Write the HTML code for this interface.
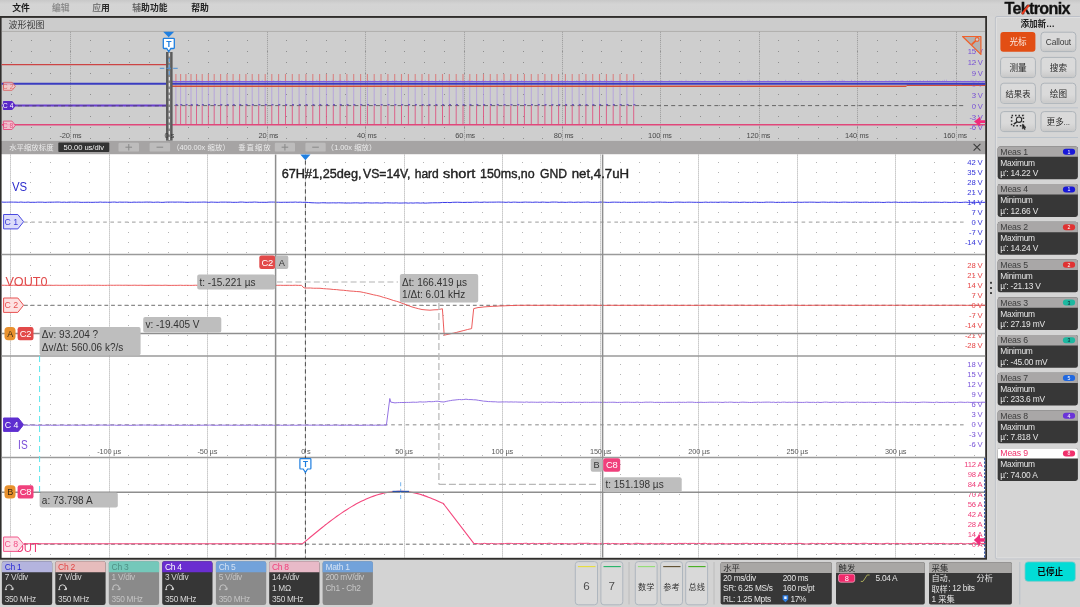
<!DOCTYPE html>
<html><head><meta charset="utf-8"><title>Oscilloscope</title>
<style>
html,body{margin:0;padding:0;background:#d3d3d3;}
body{width:1080px;height:607px;overflow:hidden;position:relative;font-family:"Liberation Sans", "Noto Sans CJK SC", sans-serif;}
svg{position:absolute;left:0;top:0;display:block;will-change:transform;}
svg text{font-family:"Liberation Sans", "Noto Sans CJK SC", sans-serif;white-space:pre;}
</style></head>
<body>
<svg width="1080" height="607" viewBox="0 0 1080 607">
<defs><linearGradient id="menug" x1="0" y1="0" x2="0" y2="1"><stop offset="0" stop-color="#c8c8c8"/><stop offset="0.25" stop-color="#d4d4d4"/><stop offset="1" stop-color="#d3d3d3"/></linearGradient><linearGradient id="btng" x1="0" y1="0" x2="0" y2="1"><stop offset="0" stop-color="#cfcfcf" stop-opacity="0"/><stop offset="1" stop-color="#c6c6c6" stop-opacity="0.9"/></linearGradient></defs>
<rect x="0.00" y="0.00" width="1080.00" height="16.50" fill="url(#menug)" />
<text x="12.20" y="11.30" font-size="8.80" fill="#1a1a1a" font-weight="bold">文件</text>
<text x="52.00" y="11.30" font-size="8.80" fill="#8c8c8c" font-weight="bold">编辑</text>
<text x="92.30" y="11.30" font-size="8.80" fill="#7a7a7a" font-weight="bold">应</text>
<text x="101.10" y="11.30" font-size="8.80" fill="#2a2a2a" font-weight="bold">用</text>
<text x="132.30" y="11.30" font-size="8.80" fill="#6a6a6a" font-weight="bold">辅</text>
<text x="141.10" y="11.30" font-size="8.80" fill="#262626" font-weight="bold">助功能</text>
<text x="191.30" y="11.30" font-size="8.80" fill="#222" font-weight="bold">帮助</text>
<text x="1004.40" y="13.90" font-size="16.20" fill="#111" font-weight="bold" textLength="66.2" lengthAdjust="spacing" id="logo" stroke="#111" stroke-width="0.3">Tektronix</text>
<line x1="1022.00" y1="14.00" x2="1028.90" y2="5.10" stroke="#e8391c" stroke-width="2.10" />
<rect x="0.00" y="16.00" width="987.00" height="543.70" fill="#302e2c" />
<rect x="1.60" y="17.90" width="983.60" height="13.30" fill="#cccccc" />
<text x="8.40" y="28.00" font-size="9.00" fill="#3a3a3a">波形视图</text>
<rect x="1.60" y="30.90" width="983.60" height="0.90" fill="#bdbbb9" />
<rect x="1.60" y="31.70" width="983.60" height="109.30" fill="#cecece" />
<rect x="1.60" y="140.90" width="983.60" height="13.20" fill="#a6a4a4" />
<rect x="1.60" y="154.10" width="983.60" height="403.70" fill="#ffffff" />
<path d="M11 40.5h1M11 51.5h1M11 62.5h1M11 73.5h1M11 83.5h1M11 94.5h1M11 105.5h1M11 116.5h1M11 127.5h1M11 138.5h1M31 40.5h1M31 51.5h1M31 62.5h1M31 73.5h1M31 83.5h1M31 94.5h1M31 105.5h1M31 116.5h1M31 127.5h1M31 138.5h1M50 40.5h1M50 51.5h1M50 62.5h1M50 73.5h1M50 83.5h1M50 94.5h1M50 105.5h1M50 116.5h1M50 127.5h1M50 138.5h1M70 40.5h1M70 51.5h1M70 62.5h1M70 73.5h1M70 83.5h1M70 94.5h1M70 105.5h1M70 116.5h1M70 127.5h1M70 138.5h1M90 40.5h1M90 51.5h1M90 62.5h1M90 73.5h1M90 83.5h1M90 94.5h1M90 105.5h1M90 116.5h1M90 127.5h1M90 138.5h1M109 40.5h1M109 51.5h1M109 62.5h1M109 73.5h1M109 83.5h1M109 94.5h1M109 105.5h1M109 116.5h1M109 127.5h1M109 138.5h1M129 40.5h1M129 51.5h1M129 62.5h1M129 73.5h1M129 83.5h1M129 94.5h1M129 105.5h1M129 116.5h1M129 127.5h1M129 138.5h1M149 40.5h1M149 51.5h1M149 62.5h1M149 73.5h1M149 83.5h1M149 94.5h1M149 105.5h1M149 116.5h1M149 127.5h1M149 138.5h1M168 40.5h1M168 51.5h1M168 62.5h1M168 73.5h1M168 83.5h1M168 94.5h1M168 105.5h1M168 116.5h1M168 127.5h1M168 138.5h1M188 40.5h1M188 51.5h1M188 62.5h1M188 73.5h1M188 83.5h1M188 94.5h1M188 105.5h1M188 116.5h1M188 127.5h1M188 138.5h1M208 40.5h1M208 51.5h1M208 62.5h1M208 73.5h1M208 83.5h1M208 94.5h1M208 105.5h1M208 116.5h1M208 127.5h1M208 138.5h1M227 40.5h1M227 51.5h1M227 62.5h1M227 73.5h1M227 83.5h1M227 94.5h1M227 105.5h1M227 116.5h1M227 127.5h1M227 138.5h1M247 40.5h1M247 51.5h1M247 62.5h1M247 73.5h1M247 83.5h1M247 94.5h1M247 105.5h1M247 116.5h1M247 127.5h1M247 138.5h1M267 40.5h1M267 51.5h1M267 62.5h1M267 73.5h1M267 83.5h1M267 94.5h1M267 105.5h1M267 116.5h1M267 127.5h1M267 138.5h1M286 40.5h1M286 51.5h1M286 62.5h1M286 73.5h1M286 83.5h1M286 94.5h1M286 105.5h1M286 116.5h1M286 127.5h1M286 138.5h1M306 40.5h1M306 51.5h1M306 62.5h1M306 73.5h1M306 83.5h1M306 94.5h1M306 105.5h1M306 116.5h1M306 127.5h1M306 138.5h1M326 40.5h1M326 51.5h1M326 62.5h1M326 73.5h1M326 83.5h1M326 94.5h1M326 105.5h1M326 116.5h1M326 127.5h1M326 138.5h1M345 40.5h1M345 51.5h1M345 62.5h1M345 73.5h1M345 83.5h1M345 94.5h1M345 105.5h1M345 116.5h1M345 127.5h1M345 138.5h1M365 40.5h1M365 51.5h1M365 62.5h1M365 73.5h1M365 83.5h1M365 94.5h1M365 105.5h1M365 116.5h1M365 127.5h1M365 138.5h1M385 40.5h1M385 51.5h1M385 62.5h1M385 73.5h1M385 83.5h1M385 94.5h1M385 105.5h1M385 116.5h1M385 127.5h1M385 138.5h1M404 40.5h1M404 51.5h1M404 62.5h1M404 73.5h1M404 83.5h1M404 94.5h1M404 105.5h1M404 116.5h1M404 127.5h1M404 138.5h1M424 40.5h1M424 51.5h1M424 62.5h1M424 73.5h1M424 83.5h1M424 94.5h1M424 105.5h1M424 116.5h1M424 127.5h1M424 138.5h1M444 40.5h1M444 51.5h1M444 62.5h1M444 73.5h1M444 83.5h1M444 94.5h1M444 105.5h1M444 116.5h1M444 127.5h1M444 138.5h1M464 40.5h1M464 51.5h1M464 62.5h1M464 73.5h1M464 83.5h1M464 94.5h1M464 105.5h1M464 116.5h1M464 127.5h1M464 138.5h1M483 40.5h1M483 51.5h1M483 62.5h1M483 73.5h1M483 83.5h1M483 94.5h1M483 105.5h1M483 116.5h1M483 127.5h1M483 138.5h1M503 40.5h1M503 51.5h1M503 62.5h1M503 73.5h1M503 83.5h1M503 94.5h1M503 105.5h1M503 116.5h1M503 127.5h1M503 138.5h1M523 40.5h1M523 51.5h1M523 62.5h1M523 73.5h1M523 83.5h1M523 94.5h1M523 105.5h1M523 116.5h1M523 127.5h1M523 138.5h1M542 40.5h1M542 51.5h1M542 62.5h1M542 73.5h1M542 83.5h1M542 94.5h1M542 105.5h1M542 116.5h1M542 127.5h1M542 138.5h1M562 40.5h1M562 51.5h1M562 62.5h1M562 73.5h1M562 83.5h1M562 94.5h1M562 105.5h1M562 116.5h1M562 127.5h1M562 138.5h1M582 40.5h1M582 51.5h1M582 62.5h1M582 73.5h1M582 83.5h1M582 94.5h1M582 105.5h1M582 116.5h1M582 127.5h1M582 138.5h1M601 40.5h1M601 51.5h1M601 62.5h1M601 73.5h1M601 83.5h1M601 94.5h1M601 105.5h1M601 116.5h1M601 127.5h1M601 138.5h1M621 40.5h1M621 51.5h1M621 62.5h1M621 73.5h1M621 83.5h1M621 94.5h1M621 105.5h1M621 116.5h1M621 127.5h1M621 138.5h1M641 40.5h1M641 51.5h1M641 62.5h1M641 73.5h1M641 83.5h1M641 94.5h1M641 105.5h1M641 116.5h1M641 127.5h1M641 138.5h1M660 40.5h1M660 51.5h1M660 62.5h1M660 73.5h1M660 83.5h1M660 94.5h1M660 105.5h1M660 116.5h1M660 127.5h1M660 138.5h1M680 40.5h1M680 51.5h1M680 62.5h1M680 73.5h1M680 83.5h1M680 94.5h1M680 105.5h1M680 116.5h1M680 127.5h1M680 138.5h1M700 40.5h1M700 51.5h1M700 62.5h1M700 73.5h1M700 83.5h1M700 94.5h1M700 105.5h1M700 116.5h1M700 127.5h1M700 138.5h1M719 40.5h1M719 51.5h1M719 62.5h1M719 73.5h1M719 83.5h1M719 94.5h1M719 105.5h1M719 116.5h1M719 127.5h1M719 138.5h1M739 40.5h1M739 51.5h1M739 62.5h1M739 73.5h1M739 83.5h1M739 94.5h1M739 105.5h1M739 116.5h1M739 127.5h1M739 138.5h1M759 40.5h1M759 51.5h1M759 62.5h1M759 73.5h1M759 83.5h1M759 94.5h1M759 105.5h1M759 116.5h1M759 127.5h1M759 138.5h1M778 40.5h1M778 51.5h1M778 62.5h1M778 73.5h1M778 83.5h1M778 94.5h1M778 105.5h1M778 116.5h1M778 127.5h1M778 138.5h1M798 40.5h1M798 51.5h1M798 62.5h1M798 73.5h1M798 83.5h1M798 94.5h1M798 105.5h1M798 116.5h1M798 127.5h1M798 138.5h1M818 40.5h1M818 51.5h1M818 62.5h1M818 73.5h1M818 83.5h1M818 94.5h1M818 105.5h1M818 116.5h1M818 127.5h1M818 138.5h1M837 40.5h1M837 51.5h1M837 62.5h1M837 73.5h1M837 83.5h1M837 94.5h1M837 105.5h1M837 116.5h1M837 127.5h1M837 138.5h1M857 40.5h1M857 51.5h1M857 62.5h1M857 73.5h1M857 83.5h1M857 94.5h1M857 105.5h1M857 116.5h1M857 127.5h1M857 138.5h1M877 40.5h1M877 51.5h1M877 62.5h1M877 73.5h1M877 83.5h1M877 94.5h1M877 105.5h1M877 116.5h1M877 127.5h1M877 138.5h1M896 40.5h1M896 51.5h1M896 62.5h1M896 73.5h1M896 83.5h1M896 94.5h1M896 105.5h1M896 116.5h1M896 127.5h1M896 138.5h1M916 40.5h1M916 51.5h1M916 62.5h1M916 73.5h1M916 83.5h1M916 94.5h1M916 105.5h1M916 116.5h1M916 127.5h1M916 138.5h1M936 40.5h1M936 51.5h1M936 62.5h1M936 73.5h1M936 83.5h1M936 94.5h1M936 105.5h1M936 116.5h1M936 127.5h1M936 138.5h1M956 40.5h1M956 51.5h1M956 62.5h1M956 73.5h1M956 83.5h1M956 94.5h1M956 105.5h1M956 116.5h1M956 127.5h1M956 138.5h1M975 40.5h1M975 51.5h1M975 62.5h1M975 73.5h1M975 83.5h1M975 94.5h1M975 105.5h1M975 116.5h1M975 127.5h1M975 138.5h1" stroke="#8e8e8e" stroke-width="1.00" fill="none" />
<line x1="70.50" y1="31.80" x2="70.50" y2="140.50" stroke="#9c9c9c" stroke-width="1.00" stroke-dasharray="1 1" />
<line x1="168.50" y1="31.80" x2="168.50" y2="140.50" stroke="#9c9c9c" stroke-width="1.00" stroke-dasharray="1 1" />
<line x1="267.50" y1="31.80" x2="267.50" y2="140.50" stroke="#9c9c9c" stroke-width="1.00" stroke-dasharray="1 1" />
<line x1="365.50" y1="31.80" x2="365.50" y2="140.50" stroke="#9c9c9c" stroke-width="1.00" stroke-dasharray="1 1" />
<line x1="464.50" y1="31.80" x2="464.50" y2="140.50" stroke="#9c9c9c" stroke-width="1.00" stroke-dasharray="1 1" />
<line x1="562.50" y1="31.80" x2="562.50" y2="140.50" stroke="#9c9c9c" stroke-width="1.00" stroke-dasharray="1 1" />
<line x1="660.50" y1="31.80" x2="660.50" y2="140.50" stroke="#9c9c9c" stroke-width="1.00" stroke-dasharray="1 1" />
<line x1="759.50" y1="31.80" x2="759.50" y2="140.50" stroke="#9c9c9c" stroke-width="1.00" stroke-dasharray="1 1" />
<line x1="857.50" y1="31.80" x2="857.50" y2="140.50" stroke="#9c9c9c" stroke-width="1.00" stroke-dasharray="1 1" />
<line x1="956.50" y1="31.80" x2="956.50" y2="140.50" stroke="#9c9c9c" stroke-width="1.00" stroke-dasharray="1 1" />
<text x="69.80" y="137.90" font-size="7.50" fill="#4a4a4a" text-anchor="end" letter-spacing="-0.15" >-20</text>
<text x="72.40" y="137.90" font-size="7.10" fill="#4a4a4a" letter-spacing="-0.35" >ms</text>
<text x="266.60" y="137.90" font-size="7.50" fill="#4a4a4a" text-anchor="end" letter-spacing="-0.15" >20</text>
<text x="269.20" y="137.90" font-size="7.10" fill="#4a4a4a" letter-spacing="-0.35" >ms</text>
<text x="365.00" y="137.90" font-size="7.50" fill="#4a4a4a" text-anchor="end" letter-spacing="-0.15" >40</text>
<text x="367.60" y="137.90" font-size="7.10" fill="#4a4a4a" letter-spacing="-0.35" >ms</text>
<text x="463.40" y="137.90" font-size="7.50" fill="#4a4a4a" text-anchor="end" letter-spacing="-0.15" >60</text>
<text x="466.00" y="137.90" font-size="7.10" fill="#4a4a4a" letter-spacing="-0.35" >ms</text>
<text x="561.80" y="137.90" font-size="7.50" fill="#4a4a4a" text-anchor="end" letter-spacing="-0.15" >80</text>
<text x="564.40" y="137.90" font-size="7.10" fill="#4a4a4a" letter-spacing="-0.35" >ms</text>
<text x="660.20" y="137.90" font-size="7.50" fill="#4a4a4a" text-anchor="end" letter-spacing="-0.15" >100</text>
<text x="662.80" y="137.90" font-size="7.10" fill="#4a4a4a" letter-spacing="-0.35" >ms</text>
<text x="758.60" y="137.90" font-size="7.50" fill="#4a4a4a" text-anchor="end" letter-spacing="-0.15" >120</text>
<text x="761.20" y="137.90" font-size="7.10" fill="#4a4a4a" letter-spacing="-0.35" >ms</text>
<text x="857.00" y="137.90" font-size="7.50" fill="#4a4a4a" text-anchor="end" letter-spacing="-0.15" >140</text>
<text x="859.60" y="137.90" font-size="7.10" fill="#4a4a4a" letter-spacing="-0.35" >ms</text>
<text x="955.40" y="137.90" font-size="7.50" fill="#4a4a4a" text-anchor="end" letter-spacing="-0.15" >160</text>
<text x="958.00" y="137.90" font-size="7.10" fill="#4a4a4a" letter-spacing="-0.35" >ms</text>
<line x1="16.00" y1="105.60" x2="965.00" y2="105.60" stroke="#666666" stroke-width="1.00" stroke-dasharray="4 3.2" />
<path d="M175.9 82.5V105.5M180.6 82.5V105.5M185.9 82.5V105.5M191.0 82.5V105.5M196.5 82.5V105.5M202.2 82.5V105.5M208.4 82.5V105.5M214.2 82.5V105.5M220.6 82.5V105.5M227.0 82.5V105.5M233.1 82.5V105.5M239.6 82.5V105.5M245.9 82.5V105.5M252.2 82.5V105.5M258.7 82.5V105.5M265.2 82.5V105.5M271.8 82.5V105.5M278.6 82.5V105.5M285.5 82.5V105.5M292.3 82.5V105.5M299.1 82.5V105.5M305.9 82.5V105.5M312.8 82.5V105.5M319.6 82.5V105.5M326.4 82.5V105.5M333.3 82.5V105.5M340.1 82.5V105.5M346.9 82.5V105.5M353.7 82.5V105.5M360.6 82.5V105.5M367.4 82.5V105.5M374.2 82.5V105.5M381.0 82.5V105.5M387.9 82.5V105.5M394.7 82.5V105.5M401.5 82.5V105.5M408.4 82.5V105.5M415.2 82.5V105.5M422.0 82.5V105.5M428.8 82.5V105.5M435.7 82.5V105.5M442.5 82.5V105.5M449.3 82.5V105.5M456.2 82.5V105.5M463.0 82.5V105.5M469.8 82.5V105.5M476.6 82.5V105.5M483.5 82.5V105.5M490.3 82.5V105.5M497.1 82.5V105.5M504.0 82.5V105.5M510.8 82.5V105.5M517.6 82.5V105.5M524.4 82.5V105.5M531.3 82.5V105.5M538.1 82.5V105.5M544.9 82.5V105.5M551.7 82.5V105.5M558.6 82.5V105.5M565.4 82.5V105.5M572.2 82.5V105.5M579.1 82.5V105.5M585.9 82.5V105.5M592.7 82.5V105.5M599.5 82.5V105.5M606.4 82.5V105.5M613.2 82.5V105.5M620.0 82.5V105.5M626.9 82.5V105.5M633.7 82.5V105.5" stroke="#a98ee4" stroke-width="1.00" fill="none" opacity="0.62"/>
<path d="M175.9 105.5V124.5M180.6 105.5V124.5M185.9 105.5V124.5M191.0 105.5V124.5M196.5 105.5V124.5M202.2 105.5V124.5M208.4 105.5V124.5M214.2 105.5V124.5M220.6 105.5V124.5M227.0 105.5V124.5M233.1 105.5V124.5M239.6 105.5V124.5M245.9 105.5V124.5M252.2 105.5V124.5M258.7 105.5V124.5M265.2 105.5V124.5M271.8 105.5V124.5M278.6 105.5V124.5M285.5 105.5V124.5M292.3 105.5V124.5M299.1 105.5V124.5M305.9 105.5V124.5M312.8 105.5V124.5M319.6 105.5V124.5M326.4 105.5V124.5M333.3 105.5V124.5M340.1 105.5V124.5M346.9 105.5V124.5M353.7 105.5V124.5M360.6 105.5V124.5M367.4 105.5V124.5M374.2 105.5V124.5M381.0 105.5V124.5M387.9 105.5V124.5M394.7 105.5V124.5M401.5 105.5V124.5M408.4 105.5V124.5M415.2 105.5V124.5M422.0 105.5V124.5M428.8 105.5V124.5M435.7 105.5V124.5M442.5 105.5V124.5M449.3 105.5V124.5M456.2 105.5V124.5M463.0 105.5V124.5M469.8 105.5V124.5M476.6 105.5V124.5M483.5 105.5V124.5M490.3 105.5V124.5M497.1 105.5V124.5M504.0 105.5V124.5M510.8 105.5V124.5M517.6 105.5V124.5M524.4 105.5V124.5M531.3 105.5V124.5M538.1 105.5V124.5M544.9 105.5V124.5M551.7 105.5V124.5M558.6 105.5V124.5M565.4 105.5V124.5M572.2 105.5V124.5M579.1 105.5V124.5M585.9 105.5V124.5M592.7 105.5V124.5M599.5 105.5V124.5M606.4 105.5V124.5M613.2 105.5V124.5M620.0 105.5V124.5M626.9 105.5V124.5M633.7 105.5V124.5" stroke="#de4f7c" stroke-width="1.00" fill="none" opacity="0.85"/>
<path d="M175.9 74v8.5M180.6 74v8.5M185.9 74v8.5M191.0 74v8.5M196.5 74v8.5M202.2 74v8.5M208.4 74v8.5M214.2 74v8.5M220.6 74v8.5M227.0 74v8.5M233.1 74v8.5M239.6 74v8.5M245.9 74v8.5M252.2 74v8.5M258.7 74v8.5M265.2 74v8.5M271.8 74v8.5M278.6 74v8.5M285.5 74v8.5M292.3 74v8.5M299.1 74v8.5M305.9 74v8.5M312.8 74v8.5M319.6 74v8.5M326.4 74v8.5M333.3 74v8.5M340.1 74v8.5M346.9 74v8.5M353.7 74v8.5M360.6 74v8.5M367.4 74v8.5M374.2 74v8.5M381.0 74v8.5M387.9 74v8.5M394.7 74v8.5M401.5 74v8.5M408.4 74v8.5M415.2 74v8.5M422.0 74v8.5M428.8 74v8.5M435.7 74v8.5M442.5 74v8.5M449.3 74v8.5M456.2 74v8.5M463.0 74v8.5M469.8 74v8.5M476.6 74v8.5M483.5 74v8.5M490.3 74v8.5M497.1 74v8.5M504.0 74v8.5M510.8 74v8.5M517.6 74v8.5M524.4 74v8.5M531.3 74v8.5M538.1 74v8.5M544.9 74v8.5M551.7 74v8.5M558.6 74v8.5M565.4 74v8.5M572.2 74v8.5M579.1 74v8.5M585.9 74v8.5M592.7 74v8.5M599.5 74v8.5M606.4 74v8.5M613.2 74v8.5M620.0 74v8.5M626.9 74v8.5M633.7 74v8.5" stroke="#dc6a6a" stroke-width="1.10" fill="none" opacity="0.75"/>
<path d="M175.6 104.8h2M180.3 104.8h2M185.6 104.8h2M190.7 104.8h2M196.2 104.8h2M201.9 104.8h2M208.1 104.8h2M213.9 104.8h2M220.3 104.8h2M226.7 104.8h2M232.8 104.8h2M239.3 104.8h2M245.6 104.8h2M251.9 104.8h2M258.4 104.8h2M264.9 104.8h2M271.5 104.8h2M278.3 104.8h2M285.2 104.8h2M292.0 104.8h2M298.8 104.8h2M305.6 104.8h2M312.5 104.8h2M319.3 104.8h2M326.1 104.8h2M333.0 104.8h2M339.8 104.8h2M346.6 104.8h2M353.4 104.8h2M360.3 104.8h2M367.1 104.8h2M373.9 104.8h2M380.7 104.8h2M387.6 104.8h2M394.4 104.8h2M401.2 104.8h2M408.1 104.8h2M414.9 104.8h2M421.7 104.8h2M428.5 104.8h2M435.4 104.8h2M442.2 104.8h2M449.0 104.8h2M455.9 104.8h2M462.7 104.8h2M469.5 104.8h2M476.3 104.8h2M483.2 104.8h2M490.0 104.8h2M496.8 104.8h2M503.7 104.8h2M510.5 104.8h2M517.3 104.8h2M524.1 104.8h2M531.0 104.8h2M537.8 104.8h2M544.6 104.8h2M551.4 104.8h2M558.3 104.8h2M565.1 104.8h2M571.9 104.8h2M578.8 104.8h2M585.6 104.8h2M592.4 104.8h2M599.2 104.8h2M606.1 104.8h2M612.9 104.8h2M619.7 104.8h2M626.6 104.8h2M633.4 104.8h2" stroke="#5a3fb0" stroke-width="1.40" fill="none" opacity="0.8"/>
<line x1="1.60" y1="64.70" x2="168.50" y2="64.70" stroke="#cc4444" stroke-width="1.30" />
<line x1="169.00" y1="86.20" x2="906.50" y2="86.20" stroke="#d0503c" stroke-width="1.60" />
<line x1="906.50" y1="85.30" x2="985.20" y2="85.30" stroke="#d0503c" stroke-width="1.40" />
<line x1="169.00" y1="81.70" x2="985.20" y2="81.70" stroke="#7f5fe0" stroke-width="1.30" />
<path d="M170.0 81v-0.4M172.0 81v-0.8M173.7 81v-0.7M176.3 81v-0.1M179.3 81v-0.0M182.1 81v-0.1M183.9 81v-0.6M187.8 81v-0.2M190.0 81v-0.8M194.4 81v-0.8M197.0 81v-1.3M198.7 81v-1.1M201.1 81v-0.2M202.9 81v-0.4M206.9 81v-0.2M210.1 81v-0.8M212.7 81v-0.7M214.4 81v-0.1M216.5 81v-0.9M219.3 81v-0.4M222.6 81v-0.6M225.0 81v-1.0M228.6 81v-0.3M231.8 81v-0.7M235.9 81v-0.9M238.3 81v-1.3M240.1 81v-0.5M243.9 81v-0.2M246.9 81v-0.1M250.4 81v-1.0M253.6 81v-1.1M256.0 81v-0.9M259.3 81v-0.8M262.2 81v-1.1M266.5 81v-0.6M270.0 81v-0.1M273.6 81v-0.8M278.1 81v-1.1M280.4 81v-0.5M284.0 81v-0.0M286.8 81v-0.2M288.7 81v-0.1M292.5 81v-0.2M294.7 81v-0.5M298.8 81v-0.1M301.7 81v-0.7M305.8 81v-1.1M309.9 81v-0.4M312.7 81v-0.5M316.8 81v-1.2M318.8 81v-0.2M321.0 81v-0.3M323.9 81v-0.8M326.2 81v-0.0M329.0 81v-0.5M332.2 81v-1.2M335.8 81v-0.7M339.1 81v-0.9M340.8 81v-1.2M344.6 81v-1.1M348.5 81v-0.5M351.2 81v-0.1M354.6 81v-0.1M356.3 81v-0.3M358.3 81v-0.4M360.0 81v-0.0M361.9 81v-0.1M364.5 81v-0.0M368.6 81v-0.8M370.6 81v-0.3M373.1 81v-0.5M375.0 81v-1.1M379.5 81v-0.6M382.4 81v-0.1M384.2 81v-0.4M386.5 81v-1.1M388.5 81v-0.0M392.8 81v-0.7M394.8 81v-0.7M396.4 81v-0.7M400.8 81v-1.1M404.4 81v-0.3M407.0 81v-0.2M410.8 81v-0.7M414.6 81v-0.4M416.8 81v-1.1M421.3 81v-1.1M425.2 81v-1.1M428.9 81v-0.3M432.0 81v-0.5M433.5 81v-0.0M435.9 81v-0.3M439.5 81v-1.2M442.3 81v-1.2M446.8 81v-1.2M449.4 81v-0.3M451.5 81v-0.3M453.7 81v-0.8M457.9 81v-1.1M460.8 81v-0.8M464.7 81v-0.1M468.2 81v-1.2M472.0 81v-1.0M475.0 81v-0.2M478.8 81v-0.4M482.7 81v-1.3M485.4 81v-0.5M489.8 81v-0.9M491.8 81v-0.2M493.7 81v-1.2M497.6 81v-0.2M501.6 81v-1.3M505.1 81v-0.5M508.2 81v-0.2M509.8 81v-1.3M513.2 81v-0.7M517.5 81v-0.6M521.6 81v-1.1M523.8 81v-0.3M526.2 81v-0.3M529.4 81v-0.3M532.2 81v-0.2M536.4 81v-0.5M539.3 81v-0.8M543.5 81v-0.5M547.7 81v-0.7M550.8 81v-0.7M552.4 81v-0.6M554.4 81v-0.0M558.3 81v-0.2M561.3 81v-0.9M564.4 81v-0.4M567.5 81v-0.7M571.3 81v-0.1M574.5 81v-0.3M576.8 81v-1.0M579.9 81v-0.7M583.7 81v-1.2M586.5 81v-0.8M589.5 81v-0.7M593.1 81v-0.6M596.2 81v-0.6M600.5 81v-0.9M604.6 81v-1.2M606.9 81v-0.7M611.2 81v-1.1M613.1 81v-0.2M616.0 81v-0.1M618.2 81v-0.1M621.7 81v-1.0M625.9 81v-0.2M629.5 81v-0.9M631.5 81v-1.1M635.9 81v-0.3M640.2 81v-0.5M643.2 81v-1.3M647.2 81v-0.2M650.0 81v-0.7M652.5 81v-0.3M655.0 81v-0.9M656.5 81v-0.7M659.3 81v-0.0M661.8 81v-0.8M664.9 81v-0.1M669.3 81v-1.0M673.7 81v-0.1M676.0 81v-0.1M679.9 81v-0.4M681.8 81v-0.5M686.0 81v-1.1M688.3 81v-0.2M692.5 81v-0.7M696.1 81v-0.1M697.8 81v-0.9M700.6 81v-0.1M704.9 81v-0.8M708.8 81v-0.1M712.9 81v-0.1M717.0 81v-0.6M719.5 81v-0.7M723.8 81v-0.3M725.6 81v-0.7M727.9 81v-0.1M729.8 81v-0.1M731.9 81v-0.4M734.4 81v-1.0M736.7 81v-0.7M738.8 81v-0.5M740.3 81v-0.3M741.9 81v-1.0M745.0 81v-0.2M747.9 81v-1.2M749.8 81v-1.1M752.6 81v-0.6M756.6 81v-0.5M759.6 81v-0.9M764.0 81v-0.4M768.0 81v-0.9M771.4 81v-0.5M774.0 81v-0.1M775.9 81v-0.1M779.6 81v-0.3M781.6 81v-0.1M785.6 81v-1.1M789.1 81v-0.4M791.3 81v-0.4M794.2 81v-0.2M797.1 81v-0.3M801.4 81v-1.3M804.6 81v-0.3M809.0 81v-0.4M811.6 81v-0.0M814.2 81v-0.6M817.2 81v-0.3M820.2 81v-0.0M822.5 81v-0.1M825.2 81v-0.1M826.8 81v-0.4M829.0 81v-0.8M832.1 81v-1.0M835.5 81v-0.9M839.7 81v-0.5M842.2 81v-1.3M844.1 81v-0.9M847.5 81v-0.1M851.5 81v-1.2M854.9 81v-1.0M858.9 81v-0.2M861.9 81v-0.7M865.9 81v-1.0M869.9 81v-0.8M874.1 81v-0.9M877.7 81v-0.3M879.3 81v-0.2M881.8 81v-0.1M885.9 81v-0.7M889.2 81v-0.8M892.8 81v-0.6M894.3 81v-1.0M898.0 81v-0.7M901.1 81v-0.9M902.8 81v-1.0M905.1 81v-0.1M907.4 81v-0.9M909.5 81v-1.0M913.9 81v-0.6M916.6 81v-0.6M920.1 81v-1.0M923.5 81v-0.8M925.2 81v-0.2M927.5 81v-1.0M929.9 81v-0.7M931.4 81v-0.1M933.7 81v-0.9M937.3 81v-0.9M939.7 81v-0.7M942.6 81v-0.6M944.4 81v-1.2M946.5 81v-1.3M950.8 81v-0.0M953.7 81v-1.1M958.1 81v-0.6M960.4 81v-0.3M964.8 81v-0.3M968.0 81v-0.2M971.1 81v-1.2M973.0 81v-1.1M976.0 81v-1.2M979.6 81v-0.3M983.8 81v-0.6" stroke="#8f6fe8" stroke-width="0.70" fill="none" opacity="0.6"/>
<line x1="1.60" y1="105.50" x2="168.50" y2="105.50" stroke="#6a3fd0" stroke-width="2.00" />
<line x1="18.00" y1="105.90" x2="168.50" y2="105.90" stroke="#3a3a3a" stroke-width="0.80" stroke-dasharray="4 3.2" opacity="0.75"/>
<line x1="1.60" y1="83.80" x2="985.20" y2="83.80" stroke="#3a3cc0" stroke-width="2.00" />
<line x1="1.60" y1="124.70" x2="985.20" y2="124.70" stroke="#e0477a" stroke-width="1.60" />
<rect x="166.00" y="52.00" width="6.60" height="88.60" fill="#5c5c5c" />
<rect x="168.30" y="52.00" width="2.00" height="88.60" fill="#8a8a8a" />
<line x1="169.30" y1="53.00" x2="169.30" y2="140.00" stroke="#f4f4f4" stroke-width="1.00" stroke-dasharray="3.5 2.5" />
<line x1="159.80" y1="68.30" x2="178.00" y2="68.30" stroke="#4a90d8" stroke-width="1.00" stroke-dasharray="4.5 2.2" />
<line x1="169.30" y1="58.00" x2="169.30" y2="76.00" stroke="#4a90d8" stroke-width="1.00" stroke-dasharray="4 2.5" />
<text x="169.30" y="137.90" font-size="7.60" fill="#3a3a3a" text-anchor="middle" letter-spacing="-0.20" >0 s</text>
<polygon points="163.20,31.80 174.20,31.80 168.70,37.20" fill="#1f7fe0" />
<path d="M164.1 38.3h9.4a0.8 0.8 0 0 1 0.8 0.8v8.6a0.8 0.8 0 0 1 -0.8 0.8h-2.6l-2.1 3l-2.1 -3h-2.6a0.8 0.8 0 0 1 -0.8 -0.8v-8.6a0.8 0.8 0 0 1 0.8 -0.8z" stroke="#1f7fe0" stroke-width="1.30" fill="#ffffff" />
<text x="168.80" y="47.20" font-size="8.60" fill="#1f7fe0" text-anchor="middle" font-weight="bold" >T</text>
<polygon points="3.40,82.30 12.20,82.30 15.40,86.30 12.20,90.30 3.40,90.30" fill="#f6c8c8" stroke="#e05a5a" stroke-width="1.00" stroke-linejoin="round" opacity="0.80"/>
<text x="8.16" y="88.75" font-size="6.80" fill="#e05050" text-anchor="middle" opacity="0.80">C 2</text>
<polygon points="3.40,101.50 12.20,101.50 15.40,105.50 12.20,109.50 3.40,109.50" fill="#5a28c8" stroke="#5a28c8" stroke-width="1.00" stroke-linejoin="round" opacity="1.00"/>
<text x="8.16" y="107.95" font-size="6.80" fill="#ffffff" text-anchor="middle" opacity="1.00">C 4</text>
<polygon points="3.40,121.10 12.04,121.10 15.40,125.30 12.04,129.50 3.40,129.50" fill="#f6c0d0" stroke="#e8447a" stroke-width="1.00" stroke-linejoin="round" opacity="0.85"/>
<text x="8.10" y="127.75" font-size="6.80" fill="#e8447a" text-anchor="middle" opacity="0.85">C 8</text>
<text x="982.60" y="53.80" font-size="7.60" fill="#7a52d8" text-anchor="end" letter-spacing="-0.20" opacity="1.00">15 V</text>
<text x="982.60" y="64.75" font-size="7.60" fill="#7a52d8" text-anchor="end" letter-spacing="-0.20" opacity="1.00">12 V</text>
<text x="982.60" y="75.70" font-size="7.60" fill="#7a52d8" text-anchor="end" letter-spacing="-0.20" opacity="1.00">9 V</text>
<text x="982.60" y="86.65" font-size="7.60" fill="#7a52d8" text-anchor="end" letter-spacing="-0.20" opacity="0.45">6 V</text>
<text x="982.60" y="97.60" font-size="7.60" fill="#7a52d8" text-anchor="end" letter-spacing="-0.20" opacity="1.00">3 V</text>
<text x="982.60" y="108.55" font-size="7.60" fill="#7a52d8" text-anchor="end" letter-spacing="-0.20" opacity="1.00">0 V</text>
<text x="982.60" y="119.50" font-size="7.60" fill="#7a52d8" text-anchor="end" letter-spacing="-0.20" opacity="1.00">-3 V</text>
<text x="982.60" y="130.45" font-size="7.60" fill="#7a52d8" text-anchor="end" letter-spacing="-0.20" opacity="1.00">-6 V</text>
<line x1="962.00" y1="83.80" x2="985.20" y2="83.80" stroke="#3a3cc0" stroke-width="1.60" opacity="0.8"/>
<polygon points="962.60,36.50 980.90,36.50 980.90,54.40" fill="#b2b2b2" stroke="#f0602a" stroke-width="1.20" stroke-linejoin="round" />
<line x1="971.60" y1="44.70" x2="975.80" y2="40.70" stroke="#f0602a" stroke-width="1.70" />
<circle cx="977.1" cy="39.5" r="1.9" fill="#cfcfd4" stroke="#f0602a" stroke-width="1.1"/>
<path d="M974 121.6l6.3 -4.8v3.4h4.9v2.8h-4.9v3.4z" stroke="none" stroke-width="0.00" fill="#f02c7c" />
<text x="9.20" y="150.40" font-size="7.40" fill="#ececec">水平缩放标度</text>
<rect x="58.30" y="142.60" width="51.00" height="9.40" fill="#333333" rx="0.80" />
<text x="83.80" y="150.10" font-size="7.60" fill="#f4f4f4" text-anchor="middle" letter-spacing="-0.05" >50.00 us/div</text>
<rect x="118.50" y="142.80" width="20.50" height="8.80" fill="#bdbcbc" rx="1.20" />
<line x1="125.45" y1="147.20" x2="132.05" y2="147.20" stroke="#8c8c8c" stroke-width="1.10" />
<line x1="128.75" y1="143.90" x2="128.75" y2="150.50" stroke="#8c8c8c" stroke-width="1.10" />
<rect x="149.60" y="142.80" width="20.50" height="8.80" fill="#bdbcbc" rx="1.20" />
<line x1="156.55" y1="147.20" x2="163.15" y2="147.20" stroke="#8c8c8c" stroke-width="1.10" />
<text x="172.20" y="150.30" font-size="7.40" fill="#ececec" font-family="&quot;Noto Sans CJK SC&quot;, sans-serif" style="font-family:'Noto Sans CJK SC', sans-serif">（</text>
<text x="179.60" y="150.10" font-size="7.40" fill="#ececec" letter-spacing="-0.10" >400.00x</text>
<text x="207.60" y="150.30" font-size="7.40" fill="#ececec" style="font-family:'Noto Sans CJK SC', sans-serif">缩放）</text>
<text x="238.20" y="150.40" font-size="7.40" fill="#ececec" letter-spacing="1.00">垂直缩放</text>
<rect x="274.80" y="142.80" width="20.20" height="8.80" fill="#bdbcbc" rx="1.20" />
<line x1="281.60" y1="147.20" x2="288.20" y2="147.20" stroke="#8c8c8c" stroke-width="1.10" />
<line x1="284.90" y1="143.90" x2="284.90" y2="150.50" stroke="#8c8c8c" stroke-width="1.10" />
<rect x="305.40" y="142.80" width="20.30" height="8.80" fill="#bdbcbc" rx="1.20" />
<line x1="312.25" y1="147.20" x2="318.85" y2="147.20" stroke="#8c8c8c" stroke-width="1.10" />
<text x="326.60" y="150.30" font-size="7.40" fill="#ececec" style="font-family:'Noto Sans CJK SC', sans-serif">（</text>
<text x="334.20" y="150.10" font-size="7.40" fill="#ececec" letter-spacing="-0.10" >1.00x</text>
<text x="354.20" y="150.30" font-size="7.40" fill="#ececec" style="font-family:'Noto Sans CJK SC', sans-serif">缩放）</text>
<path d="M973.6 143.9l6.8 6.8M980.4 143.9l-6.8 6.8" stroke="#3a3a3a" stroke-width="1.10" fill="none" />
<path d="M30 162.5h1M30 172.5h1M30 182.5h1M30 192.5h1M30 202.5h1M30 212.5h1M30 222.5h1M30 232.5h1M30 242.5h1M30 252.5h1M50 162.5h1M50 172.5h1M50 182.5h1M50 192.5h1M50 202.5h1M50 212.5h1M50 222.5h1M50 232.5h1M50 242.5h1M50 252.5h1M69 162.5h1M69 172.5h1M69 182.5h1M69 192.5h1M69 202.5h1M69 212.5h1M69 222.5h1M69 232.5h1M69 242.5h1M69 252.5h1M89 162.5h1M89 172.5h1M89 182.5h1M89 192.5h1M89 202.5h1M89 212.5h1M89 222.5h1M89 232.5h1M89 242.5h1M89 252.5h1M128 162.5h1M128 172.5h1M128 182.5h1M128 192.5h1M128 202.5h1M128 212.5h1M128 222.5h1M128 232.5h1M128 242.5h1M128 252.5h1M148 162.5h1M148 172.5h1M148 182.5h1M148 192.5h1M148 202.5h1M148 212.5h1M148 222.5h1M148 232.5h1M148 242.5h1M148 252.5h1M168 162.5h1M168 172.5h1M168 182.5h1M168 192.5h1M168 202.5h1M168 212.5h1M168 222.5h1M168 232.5h1M168 242.5h1M168 252.5h1M187 162.5h1M187 172.5h1M187 182.5h1M187 192.5h1M187 202.5h1M187 212.5h1M187 222.5h1M187 232.5h1M187 242.5h1M187 252.5h1M227 162.5h1M227 172.5h1M227 182.5h1M227 192.5h1M227 202.5h1M227 212.5h1M227 222.5h1M227 232.5h1M227 242.5h1M227 252.5h1M246 162.5h1M246 172.5h1M246 182.5h1M246 192.5h1M246 202.5h1M246 212.5h1M246 222.5h1M246 232.5h1M246 242.5h1M246 252.5h1M266 162.5h1M266 172.5h1M266 182.5h1M266 192.5h1M266 202.5h1M266 212.5h1M266 222.5h1M266 232.5h1M266 242.5h1M266 252.5h1M286 162.5h1M286 172.5h1M286 182.5h1M286 192.5h1M286 202.5h1M286 212.5h1M286 222.5h1M286 232.5h1M286 242.5h1M286 252.5h1M325 162.5h1M325 172.5h1M325 182.5h1M325 192.5h1M325 202.5h1M325 212.5h1M325 222.5h1M325 232.5h1M325 242.5h1M325 252.5h1M345 162.5h1M345 172.5h1M345 182.5h1M345 192.5h1M345 202.5h1M345 212.5h1M345 222.5h1M345 232.5h1M345 242.5h1M345 252.5h1M364 162.5h1M364 172.5h1M364 182.5h1M364 192.5h1M364 202.5h1M364 212.5h1M364 222.5h1M364 232.5h1M364 242.5h1M364 252.5h1M384 162.5h1M384 172.5h1M384 182.5h1M384 192.5h1M384 202.5h1M384 212.5h1M384 222.5h1M384 232.5h1M384 242.5h1M384 252.5h1M423 162.5h1M423 172.5h1M423 182.5h1M423 192.5h1M423 202.5h1M423 212.5h1M423 222.5h1M423 232.5h1M423 242.5h1M423 252.5h1M443 162.5h1M443 172.5h1M443 182.5h1M443 192.5h1M443 202.5h1M443 212.5h1M443 222.5h1M443 232.5h1M443 242.5h1M443 252.5h1M463 162.5h1M463 172.5h1M463 182.5h1M463 192.5h1M463 202.5h1M463 212.5h1M463 222.5h1M463 232.5h1M463 242.5h1M463 252.5h1M482 162.5h1M482 172.5h1M482 182.5h1M482 192.5h1M482 202.5h1M482 212.5h1M482 222.5h1M482 232.5h1M482 242.5h1M482 252.5h1M522 162.5h1M522 172.5h1M522 182.5h1M522 192.5h1M522 202.5h1M522 212.5h1M522 222.5h1M522 232.5h1M522 242.5h1M522 252.5h1M541 162.5h1M541 172.5h1M541 182.5h1M541 192.5h1M541 202.5h1M541 212.5h1M541 222.5h1M541 232.5h1M541 242.5h1M541 252.5h1M561 162.5h1M561 172.5h1M561 182.5h1M561 192.5h1M561 202.5h1M561 212.5h1M561 222.5h1M561 232.5h1M561 242.5h1M561 252.5h1M580 162.5h1M580 172.5h1M580 182.5h1M580 192.5h1M580 202.5h1M580 212.5h1M580 222.5h1M580 232.5h1M580 242.5h1M580 252.5h1M620 162.5h1M620 172.5h1M620 182.5h1M620 192.5h1M620 202.5h1M620 212.5h1M620 222.5h1M620 232.5h1M620 242.5h1M620 252.5h1M639 162.5h1M639 172.5h1M639 182.5h1M639 192.5h1M639 202.5h1M639 212.5h1M639 222.5h1M639 232.5h1M639 242.5h1M639 252.5h1M659 162.5h1M659 172.5h1M659 182.5h1M659 192.5h1M659 202.5h1M659 212.5h1M659 222.5h1M659 232.5h1M659 242.5h1M659 252.5h1M679 162.5h1M679 172.5h1M679 182.5h1M679 192.5h1M679 202.5h1M679 212.5h1M679 222.5h1M679 232.5h1M679 242.5h1M679 252.5h1M718 162.5h1M718 172.5h1M718 182.5h1M718 192.5h1M718 202.5h1M718 212.5h1M718 222.5h1M718 232.5h1M718 242.5h1M718 252.5h1M738 162.5h1M738 172.5h1M738 182.5h1M738 192.5h1M738 202.5h1M738 212.5h1M738 222.5h1M738 232.5h1M738 242.5h1M738 252.5h1M757 162.5h1M757 172.5h1M757 182.5h1M757 192.5h1M757 202.5h1M757 212.5h1M757 222.5h1M757 232.5h1M757 242.5h1M757 252.5h1M777 162.5h1M777 172.5h1M777 182.5h1M777 192.5h1M777 202.5h1M777 212.5h1M777 222.5h1M777 232.5h1M777 242.5h1M777 252.5h1M816 162.5h1M816 172.5h1M816 182.5h1M816 192.5h1M816 202.5h1M816 212.5h1M816 222.5h1M816 232.5h1M816 242.5h1M816 252.5h1M836 162.5h1M836 172.5h1M836 182.5h1M836 192.5h1M836 202.5h1M836 212.5h1M836 222.5h1M836 232.5h1M836 242.5h1M836 252.5h1M856 162.5h1M856 172.5h1M856 182.5h1M856 192.5h1M856 202.5h1M856 212.5h1M856 222.5h1M856 232.5h1M856 242.5h1M856 252.5h1M875 162.5h1M875 172.5h1M875 182.5h1M875 192.5h1M875 202.5h1M875 212.5h1M875 222.5h1M875 232.5h1M875 242.5h1M875 252.5h1M915 162.5h1M915 172.5h1M915 182.5h1M915 192.5h1M915 202.5h1M915 212.5h1M915 222.5h1M915 232.5h1M915 242.5h1M915 252.5h1M934 162.5h1M934 172.5h1M934 182.5h1M934 192.5h1M934 202.5h1M934 212.5h1M934 222.5h1M934 232.5h1M934 242.5h1M934 252.5h1M954 162.5h1M954 172.5h1M954 182.5h1M954 192.5h1M954 202.5h1M954 212.5h1M954 222.5h1M954 232.5h1M954 242.5h1M954 252.5h1M974 162.5h1M974 172.5h1M974 182.5h1M974 192.5h1M974 202.5h1M974 212.5h1M974 222.5h1M974 232.5h1M974 242.5h1M974 252.5h1M30 265.5h1M30 275.5h1M30 285.5h1M30 295.5h1M30 305.5h1M30 315.5h1M30 325.5h1M30 335.5h1M30 345.5h1M50 265.5h1M50 275.5h1M50 285.5h1M50 295.5h1M50 305.5h1M50 315.5h1M50 325.5h1M50 335.5h1M50 345.5h1M69 265.5h1M69 275.5h1M69 285.5h1M69 295.5h1M69 305.5h1M69 315.5h1M69 325.5h1M69 335.5h1M69 345.5h1M89 265.5h1M89 275.5h1M89 285.5h1M89 295.5h1M89 305.5h1M89 315.5h1M89 325.5h1M89 335.5h1M89 345.5h1M128 265.5h1M128 275.5h1M128 285.5h1M128 295.5h1M128 305.5h1M128 315.5h1M128 325.5h1M128 335.5h1M128 345.5h1M148 265.5h1M148 275.5h1M148 285.5h1M148 295.5h1M148 305.5h1M148 315.5h1M148 325.5h1M148 335.5h1M148 345.5h1M168 265.5h1M168 275.5h1M168 285.5h1M168 295.5h1M168 305.5h1M168 315.5h1M168 325.5h1M168 335.5h1M168 345.5h1M187 265.5h1M187 275.5h1M187 285.5h1M187 295.5h1M187 305.5h1M187 315.5h1M187 325.5h1M187 335.5h1M187 345.5h1M227 265.5h1M227 275.5h1M227 285.5h1M227 295.5h1M227 305.5h1M227 315.5h1M227 325.5h1M227 335.5h1M227 345.5h1M246 265.5h1M246 275.5h1M246 285.5h1M246 295.5h1M246 305.5h1M246 315.5h1M246 325.5h1M246 335.5h1M246 345.5h1M266 265.5h1M266 275.5h1M266 285.5h1M266 295.5h1M266 305.5h1M266 315.5h1M266 325.5h1M266 335.5h1M266 345.5h1M286 265.5h1M286 275.5h1M286 285.5h1M286 295.5h1M286 305.5h1M286 315.5h1M286 325.5h1M286 335.5h1M286 345.5h1M325 265.5h1M325 275.5h1M325 285.5h1M325 295.5h1M325 305.5h1M325 315.5h1M325 325.5h1M325 335.5h1M325 345.5h1M345 265.5h1M345 275.5h1M345 285.5h1M345 295.5h1M345 305.5h1M345 315.5h1M345 325.5h1M345 335.5h1M345 345.5h1M364 265.5h1M364 275.5h1M364 285.5h1M364 295.5h1M364 305.5h1M364 315.5h1M364 325.5h1M364 335.5h1M364 345.5h1M384 265.5h1M384 275.5h1M384 285.5h1M384 295.5h1M384 305.5h1M384 315.5h1M384 325.5h1M384 335.5h1M384 345.5h1M423 265.5h1M423 275.5h1M423 285.5h1M423 295.5h1M423 305.5h1M423 315.5h1M423 325.5h1M423 335.5h1M423 345.5h1M443 265.5h1M443 275.5h1M443 285.5h1M443 295.5h1M443 305.5h1M443 315.5h1M443 325.5h1M443 335.5h1M443 345.5h1M463 265.5h1M463 275.5h1M463 285.5h1M463 295.5h1M463 305.5h1M463 315.5h1M463 325.5h1M463 335.5h1M463 345.5h1M482 265.5h1M482 275.5h1M482 285.5h1M482 295.5h1M482 305.5h1M482 315.5h1M482 325.5h1M482 335.5h1M482 345.5h1M522 265.5h1M522 275.5h1M522 285.5h1M522 295.5h1M522 305.5h1M522 315.5h1M522 325.5h1M522 335.5h1M522 345.5h1M541 265.5h1M541 275.5h1M541 285.5h1M541 295.5h1M541 305.5h1M541 315.5h1M541 325.5h1M541 335.5h1M541 345.5h1M561 265.5h1M561 275.5h1M561 285.5h1M561 295.5h1M561 305.5h1M561 315.5h1M561 325.5h1M561 335.5h1M561 345.5h1M580 265.5h1M580 275.5h1M580 285.5h1M580 295.5h1M580 305.5h1M580 315.5h1M580 325.5h1M580 335.5h1M580 345.5h1M620 265.5h1M620 275.5h1M620 285.5h1M620 295.5h1M620 305.5h1M620 315.5h1M620 325.5h1M620 335.5h1M620 345.5h1M639 265.5h1M639 275.5h1M639 285.5h1M639 295.5h1M639 305.5h1M639 315.5h1M639 325.5h1M639 335.5h1M639 345.5h1M659 265.5h1M659 275.5h1M659 285.5h1M659 295.5h1M659 305.5h1M659 315.5h1M659 325.5h1M659 335.5h1M659 345.5h1M679 265.5h1M679 275.5h1M679 285.5h1M679 295.5h1M679 305.5h1M679 315.5h1M679 325.5h1M679 335.5h1M679 345.5h1M718 265.5h1M718 275.5h1M718 285.5h1M718 295.5h1M718 305.5h1M718 315.5h1M718 325.5h1M718 335.5h1M718 345.5h1M738 265.5h1M738 275.5h1M738 285.5h1M738 295.5h1M738 305.5h1M738 315.5h1M738 325.5h1M738 335.5h1M738 345.5h1M757 265.5h1M757 275.5h1M757 285.5h1M757 295.5h1M757 305.5h1M757 315.5h1M757 325.5h1M757 335.5h1M757 345.5h1M777 265.5h1M777 275.5h1M777 285.5h1M777 295.5h1M777 305.5h1M777 315.5h1M777 325.5h1M777 335.5h1M777 345.5h1M816 265.5h1M816 275.5h1M816 285.5h1M816 295.5h1M816 305.5h1M816 315.5h1M816 325.5h1M816 335.5h1M816 345.5h1M836 265.5h1M836 275.5h1M836 285.5h1M836 295.5h1M836 305.5h1M836 315.5h1M836 325.5h1M836 335.5h1M836 345.5h1M856 265.5h1M856 275.5h1M856 285.5h1M856 295.5h1M856 305.5h1M856 315.5h1M856 325.5h1M856 335.5h1M856 345.5h1M875 265.5h1M875 275.5h1M875 285.5h1M875 295.5h1M875 305.5h1M875 315.5h1M875 325.5h1M875 335.5h1M875 345.5h1M915 265.5h1M915 275.5h1M915 285.5h1M915 295.5h1M915 305.5h1M915 315.5h1M915 325.5h1M915 335.5h1M915 345.5h1M934 265.5h1M934 275.5h1M934 285.5h1M934 295.5h1M934 305.5h1M934 315.5h1M934 325.5h1M934 335.5h1M934 345.5h1M954 265.5h1M954 275.5h1M954 285.5h1M954 295.5h1M954 305.5h1M954 315.5h1M954 325.5h1M954 335.5h1M954 345.5h1M974 265.5h1M974 275.5h1M974 285.5h1M974 295.5h1M974 305.5h1M974 315.5h1M974 325.5h1M974 335.5h1M974 345.5h1M30 364.5h1M30 374.5h1M30 384.5h1M30 394.5h1M30 404.5h1M30 414.5h1M30 424.5h1M30 435.5h1M30 445.5h1M30 455.5h1M50 364.5h1M50 374.5h1M50 384.5h1M50 394.5h1M50 404.5h1M50 414.5h1M50 424.5h1M50 435.5h1M50 445.5h1M50 455.5h1M69 364.5h1M69 374.5h1M69 384.5h1M69 394.5h1M69 404.5h1M69 414.5h1M69 424.5h1M69 435.5h1M69 445.5h1M69 455.5h1M89 364.5h1M89 374.5h1M89 384.5h1M89 394.5h1M89 404.5h1M89 414.5h1M89 424.5h1M89 435.5h1M89 445.5h1M89 455.5h1M128 364.5h1M128 374.5h1M128 384.5h1M128 394.5h1M128 404.5h1M128 414.5h1M128 424.5h1M128 435.5h1M128 445.5h1M128 455.5h1M148 364.5h1M148 374.5h1M148 384.5h1M148 394.5h1M148 404.5h1M148 414.5h1M148 424.5h1M148 435.5h1M148 445.5h1M148 455.5h1M168 364.5h1M168 374.5h1M168 384.5h1M168 394.5h1M168 404.5h1M168 414.5h1M168 424.5h1M168 435.5h1M168 445.5h1M168 455.5h1M187 364.5h1M187 374.5h1M187 384.5h1M187 394.5h1M187 404.5h1M187 414.5h1M187 424.5h1M187 435.5h1M187 445.5h1M187 455.5h1M227 364.5h1M227 374.5h1M227 384.5h1M227 394.5h1M227 404.5h1M227 414.5h1M227 424.5h1M227 435.5h1M227 445.5h1M227 455.5h1M246 364.5h1M246 374.5h1M246 384.5h1M246 394.5h1M246 404.5h1M246 414.5h1M246 424.5h1M246 435.5h1M246 445.5h1M246 455.5h1M266 364.5h1M266 374.5h1M266 384.5h1M266 394.5h1M266 404.5h1M266 414.5h1M266 424.5h1M266 435.5h1M266 445.5h1M266 455.5h1M286 364.5h1M286 374.5h1M286 384.5h1M286 394.5h1M286 404.5h1M286 414.5h1M286 424.5h1M286 435.5h1M286 445.5h1M286 455.5h1M325 364.5h1M325 374.5h1M325 384.5h1M325 394.5h1M325 404.5h1M325 414.5h1M325 424.5h1M325 435.5h1M325 445.5h1M325 455.5h1M345 364.5h1M345 374.5h1M345 384.5h1M345 394.5h1M345 404.5h1M345 414.5h1M345 424.5h1M345 435.5h1M345 445.5h1M345 455.5h1M364 364.5h1M364 374.5h1M364 384.5h1M364 394.5h1M364 404.5h1M364 414.5h1M364 424.5h1M364 435.5h1M364 445.5h1M364 455.5h1M384 364.5h1M384 374.5h1M384 384.5h1M384 394.5h1M384 404.5h1M384 414.5h1M384 424.5h1M384 435.5h1M384 445.5h1M384 455.5h1M423 364.5h1M423 374.5h1M423 384.5h1M423 394.5h1M423 404.5h1M423 414.5h1M423 424.5h1M423 435.5h1M423 445.5h1M423 455.5h1M443 364.5h1M443 374.5h1M443 384.5h1M443 394.5h1M443 404.5h1M443 414.5h1M443 424.5h1M443 435.5h1M443 445.5h1M443 455.5h1M463 364.5h1M463 374.5h1M463 384.5h1M463 394.5h1M463 404.5h1M463 414.5h1M463 424.5h1M463 435.5h1M463 445.5h1M463 455.5h1M482 364.5h1M482 374.5h1M482 384.5h1M482 394.5h1M482 404.5h1M482 414.5h1M482 424.5h1M482 435.5h1M482 445.5h1M482 455.5h1M522 364.5h1M522 374.5h1M522 384.5h1M522 394.5h1M522 404.5h1M522 414.5h1M522 424.5h1M522 435.5h1M522 445.5h1M522 455.5h1M541 364.5h1M541 374.5h1M541 384.5h1M541 394.5h1M541 404.5h1M541 414.5h1M541 424.5h1M541 435.5h1M541 445.5h1M541 455.5h1M561 364.5h1M561 374.5h1M561 384.5h1M561 394.5h1M561 404.5h1M561 414.5h1M561 424.5h1M561 435.5h1M561 445.5h1M561 455.5h1M580 364.5h1M580 374.5h1M580 384.5h1M580 394.5h1M580 404.5h1M580 414.5h1M580 424.5h1M580 435.5h1M580 445.5h1M580 455.5h1M620 364.5h1M620 374.5h1M620 384.5h1M620 394.5h1M620 404.5h1M620 414.5h1M620 424.5h1M620 435.5h1M620 445.5h1M620 455.5h1M639 364.5h1M639 374.5h1M639 384.5h1M639 394.5h1M639 404.5h1M639 414.5h1M639 424.5h1M639 435.5h1M639 445.5h1M639 455.5h1M659 364.5h1M659 374.5h1M659 384.5h1M659 394.5h1M659 404.5h1M659 414.5h1M659 424.5h1M659 435.5h1M659 445.5h1M659 455.5h1M679 364.5h1M679 374.5h1M679 384.5h1M679 394.5h1M679 404.5h1M679 414.5h1M679 424.5h1M679 435.5h1M679 445.5h1M679 455.5h1M718 364.5h1M718 374.5h1M718 384.5h1M718 394.5h1M718 404.5h1M718 414.5h1M718 424.5h1M718 435.5h1M718 445.5h1M718 455.5h1M738 364.5h1M738 374.5h1M738 384.5h1M738 394.5h1M738 404.5h1M738 414.5h1M738 424.5h1M738 435.5h1M738 445.5h1M738 455.5h1M757 364.5h1M757 374.5h1M757 384.5h1M757 394.5h1M757 404.5h1M757 414.5h1M757 424.5h1M757 435.5h1M757 445.5h1M757 455.5h1M777 364.5h1M777 374.5h1M777 384.5h1M777 394.5h1M777 404.5h1M777 414.5h1M777 424.5h1M777 435.5h1M777 445.5h1M777 455.5h1M816 364.5h1M816 374.5h1M816 384.5h1M816 394.5h1M816 404.5h1M816 414.5h1M816 424.5h1M816 435.5h1M816 445.5h1M816 455.5h1M836 364.5h1M836 374.5h1M836 384.5h1M836 394.5h1M836 404.5h1M836 414.5h1M836 424.5h1M836 435.5h1M836 445.5h1M836 455.5h1M856 364.5h1M856 374.5h1M856 384.5h1M856 394.5h1M856 404.5h1M856 414.5h1M856 424.5h1M856 435.5h1M856 445.5h1M856 455.5h1M875 364.5h1M875 374.5h1M875 384.5h1M875 394.5h1M875 404.5h1M875 414.5h1M875 424.5h1M875 435.5h1M875 445.5h1M875 455.5h1M915 364.5h1M915 374.5h1M915 384.5h1M915 394.5h1M915 404.5h1M915 414.5h1M915 424.5h1M915 435.5h1M915 445.5h1M915 455.5h1M934 364.5h1M934 374.5h1M934 384.5h1M934 394.5h1M934 404.5h1M934 414.5h1M934 424.5h1M934 435.5h1M934 445.5h1M934 455.5h1M954 364.5h1M954 374.5h1M954 384.5h1M954 394.5h1M954 404.5h1M954 414.5h1M954 424.5h1M954 435.5h1M954 445.5h1M954 455.5h1M974 364.5h1M974 374.5h1M974 384.5h1M974 394.5h1M974 404.5h1M974 414.5h1M974 424.5h1M974 435.5h1M974 445.5h1M974 455.5h1M30 464.5h1M30 474.5h1M30 484.5h1M30 494.5h1M30 504.5h1M30 514.5h1M30 524.5h1M30 534.5h1M30 544.5h1M30 554.5h1M50 464.5h1M50 474.5h1M50 484.5h1M50 494.5h1M50 504.5h1M50 514.5h1M50 524.5h1M50 534.5h1M50 544.5h1M50 554.5h1M69 464.5h1M69 474.5h1M69 484.5h1M69 494.5h1M69 504.5h1M69 514.5h1M69 524.5h1M69 534.5h1M69 544.5h1M69 554.5h1M89 464.5h1M89 474.5h1M89 484.5h1M89 494.5h1M89 504.5h1M89 514.5h1M89 524.5h1M89 534.5h1M89 544.5h1M89 554.5h1M128 464.5h1M128 474.5h1M128 484.5h1M128 494.5h1M128 504.5h1M128 514.5h1M128 524.5h1M128 534.5h1M128 544.5h1M128 554.5h1M148 464.5h1M148 474.5h1M148 484.5h1M148 494.5h1M148 504.5h1M148 514.5h1M148 524.5h1M148 534.5h1M148 544.5h1M148 554.5h1M168 464.5h1M168 474.5h1M168 484.5h1M168 494.5h1M168 504.5h1M168 514.5h1M168 524.5h1M168 534.5h1M168 544.5h1M168 554.5h1M187 464.5h1M187 474.5h1M187 484.5h1M187 494.5h1M187 504.5h1M187 514.5h1M187 524.5h1M187 534.5h1M187 544.5h1M187 554.5h1M227 464.5h1M227 474.5h1M227 484.5h1M227 494.5h1M227 504.5h1M227 514.5h1M227 524.5h1M227 534.5h1M227 544.5h1M227 554.5h1M246 464.5h1M246 474.5h1M246 484.5h1M246 494.5h1M246 504.5h1M246 514.5h1M246 524.5h1M246 534.5h1M246 544.5h1M246 554.5h1M266 464.5h1M266 474.5h1M266 484.5h1M266 494.5h1M266 504.5h1M266 514.5h1M266 524.5h1M266 534.5h1M266 544.5h1M266 554.5h1M286 464.5h1M286 474.5h1M286 484.5h1M286 494.5h1M286 504.5h1M286 514.5h1M286 524.5h1M286 534.5h1M286 544.5h1M286 554.5h1M325 464.5h1M325 474.5h1M325 484.5h1M325 494.5h1M325 504.5h1M325 514.5h1M325 524.5h1M325 534.5h1M325 544.5h1M325 554.5h1M345 464.5h1M345 474.5h1M345 484.5h1M345 494.5h1M345 504.5h1M345 514.5h1M345 524.5h1M345 534.5h1M345 544.5h1M345 554.5h1M364 464.5h1M364 474.5h1M364 484.5h1M364 494.5h1M364 504.5h1M364 514.5h1M364 524.5h1M364 534.5h1M364 544.5h1M364 554.5h1M384 464.5h1M384 474.5h1M384 484.5h1M384 494.5h1M384 504.5h1M384 514.5h1M384 524.5h1M384 534.5h1M384 544.5h1M384 554.5h1M423 464.5h1M423 474.5h1M423 484.5h1M423 494.5h1M423 504.5h1M423 514.5h1M423 524.5h1M423 534.5h1M423 544.5h1M423 554.5h1M443 464.5h1M443 474.5h1M443 484.5h1M443 494.5h1M443 504.5h1M443 514.5h1M443 524.5h1M443 534.5h1M443 544.5h1M443 554.5h1M463 464.5h1M463 474.5h1M463 484.5h1M463 494.5h1M463 504.5h1M463 514.5h1M463 524.5h1M463 534.5h1M463 544.5h1M463 554.5h1M482 464.5h1M482 474.5h1M482 484.5h1M482 494.5h1M482 504.5h1M482 514.5h1M482 524.5h1M482 534.5h1M482 544.5h1M482 554.5h1M522 464.5h1M522 474.5h1M522 484.5h1M522 494.5h1M522 504.5h1M522 514.5h1M522 524.5h1M522 534.5h1M522 544.5h1M522 554.5h1M541 464.5h1M541 474.5h1M541 484.5h1M541 494.5h1M541 504.5h1M541 514.5h1M541 524.5h1M541 534.5h1M541 544.5h1M541 554.5h1M561 464.5h1M561 474.5h1M561 484.5h1M561 494.5h1M561 504.5h1M561 514.5h1M561 524.5h1M561 534.5h1M561 544.5h1M561 554.5h1M580 464.5h1M580 474.5h1M580 484.5h1M580 494.5h1M580 504.5h1M580 514.5h1M580 524.5h1M580 534.5h1M580 544.5h1M580 554.5h1M620 464.5h1M620 474.5h1M620 484.5h1M620 494.5h1M620 504.5h1M620 514.5h1M620 524.5h1M620 534.5h1M620 544.5h1M620 554.5h1M639 464.5h1M639 474.5h1M639 484.5h1M639 494.5h1M639 504.5h1M639 514.5h1M639 524.5h1M639 534.5h1M639 544.5h1M639 554.5h1M659 464.5h1M659 474.5h1M659 484.5h1M659 494.5h1M659 504.5h1M659 514.5h1M659 524.5h1M659 534.5h1M659 544.5h1M659 554.5h1M679 464.5h1M679 474.5h1M679 484.5h1M679 494.5h1M679 504.5h1M679 514.5h1M679 524.5h1M679 534.5h1M679 544.5h1M679 554.5h1M718 464.5h1M718 474.5h1M718 484.5h1M718 494.5h1M718 504.5h1M718 514.5h1M718 524.5h1M718 534.5h1M718 544.5h1M718 554.5h1M738 464.5h1M738 474.5h1M738 484.5h1M738 494.5h1M738 504.5h1M738 514.5h1M738 524.5h1M738 534.5h1M738 544.5h1M738 554.5h1M757 464.5h1M757 474.5h1M757 484.5h1M757 494.5h1M757 504.5h1M757 514.5h1M757 524.5h1M757 534.5h1M757 544.5h1M757 554.5h1M777 464.5h1M777 474.5h1M777 484.5h1M777 494.5h1M777 504.5h1M777 514.5h1M777 524.5h1M777 534.5h1M777 544.5h1M777 554.5h1M816 464.5h1M816 474.5h1M816 484.5h1M816 494.5h1M816 504.5h1M816 514.5h1M816 524.5h1M816 534.5h1M816 544.5h1M816 554.5h1M836 464.5h1M836 474.5h1M836 484.5h1M836 494.5h1M836 504.5h1M836 514.5h1M836 524.5h1M836 534.5h1M836 544.5h1M836 554.5h1M856 464.5h1M856 474.5h1M856 484.5h1M856 494.5h1M856 504.5h1M856 514.5h1M856 524.5h1M856 534.5h1M856 544.5h1M856 554.5h1M875 464.5h1M875 474.5h1M875 484.5h1M875 494.5h1M875 504.5h1M875 514.5h1M875 524.5h1M875 534.5h1M875 544.5h1M875 554.5h1M915 464.5h1M915 474.5h1M915 484.5h1M915 494.5h1M915 504.5h1M915 514.5h1M915 524.5h1M915 534.5h1M915 544.5h1M915 554.5h1M934 464.5h1M934 474.5h1M934 484.5h1M934 494.5h1M934 504.5h1M934 514.5h1M934 524.5h1M934 534.5h1M934 544.5h1M934 554.5h1M954 464.5h1M954 474.5h1M954 484.5h1M954 494.5h1M954 504.5h1M954 514.5h1M954 524.5h1M954 534.5h1M954 544.5h1M954 554.5h1M974 464.5h1M974 474.5h1M974 484.5h1M974 494.5h1M974 504.5h1M974 514.5h1M974 524.5h1M974 534.5h1M974 544.5h1M974 554.5h1" stroke="#b4b4b4" stroke-width="1.00" fill="none" />
<line x1="10.50" y1="154.60" x2="10.50" y2="557.60" stroke="#a6a6a6" stroke-width="1.00" stroke-dasharray="1 1" />
<line x1="109.50" y1="154.60" x2="109.50" y2="557.60" stroke="#a6a6a6" stroke-width="1.00" stroke-dasharray="1 1" />
<line x1="207.50" y1="154.60" x2="207.50" y2="557.60" stroke="#a6a6a6" stroke-width="1.00" stroke-dasharray="1 1" />
<line x1="305.50" y1="154.60" x2="305.50" y2="557.60" stroke="#a6a6a6" stroke-width="1.00" stroke-dasharray="1 1" />
<line x1="404.50" y1="154.60" x2="404.50" y2="557.60" stroke="#a6a6a6" stroke-width="1.00" stroke-dasharray="1 1" />
<line x1="502.50" y1="154.60" x2="502.50" y2="557.60" stroke="#a6a6a6" stroke-width="1.00" stroke-dasharray="1 1" />
<line x1="600.50" y1="154.60" x2="600.50" y2="557.60" stroke="#a6a6a6" stroke-width="1.00" stroke-dasharray="1 1" />
<line x1="698.50" y1="154.60" x2="698.50" y2="557.60" stroke="#a6a6a6" stroke-width="1.00" stroke-dasharray="1 1" />
<line x1="797.50" y1="154.60" x2="797.50" y2="557.60" stroke="#a6a6a6" stroke-width="1.00" stroke-dasharray="1 1" />
<line x1="895.50" y1="154.60" x2="895.50" y2="557.60" stroke="#a6a6a6" stroke-width="1.00" stroke-dasharray="1 1" />
<line x1="1.60" y1="254.50" x2="985.20" y2="254.50" stroke="#9a9a9a" stroke-width="1.50" />
<line x1="1.60" y1="356.00" x2="985.20" y2="356.00" stroke="#9a9a9a" stroke-width="1.50" />
<line x1="1.60" y1="457.40" x2="985.20" y2="457.40" stroke="#9a9a9a" stroke-width="1.50" />
<line x1="24.00" y1="222.10" x2="966.00" y2="222.10" stroke="#b0b0b0" stroke-width="1.40" stroke-dasharray="3.6 3.6" />
<line x1="24.00" y1="305.30" x2="985.00" y2="305.30" stroke="#4a4a4a" stroke-width="0.80" stroke-dasharray="3.8 2.9" />
<line x1="24.00" y1="424.70" x2="966.00" y2="424.70" stroke="#b0b0b0" stroke-width="1.40" stroke-dasharray="3.6 3.6" />
<line x1="24.00" y1="544.20" x2="985.00" y2="544.20" stroke="#4a4a4a" stroke-width="0.80" stroke-dasharray="3.8 2.9" />
<text x="982.50" y="164.83" font-size="7.70" fill="#3838dc" text-anchor="end" letter-spacing="-0.15" >42 V</text>
<text x="982.50" y="174.85" font-size="7.70" fill="#3838dc" text-anchor="end" letter-spacing="-0.15" >35 V</text>
<text x="982.50" y="184.87" font-size="7.70" fill="#3838dc" text-anchor="end" letter-spacing="-0.15" >28 V</text>
<text x="982.50" y="194.89" font-size="7.70" fill="#3838dc" text-anchor="end" letter-spacing="-0.15" >21 V</text>
<text x="982.50" y="204.91" font-size="7.70" fill="#3838dc" text-anchor="end" letter-spacing="-0.15" >14 V</text>
<text x="982.50" y="214.93" font-size="7.70" fill="#3838dc" text-anchor="end" letter-spacing="-0.15" >7 V</text>
<text x="982.50" y="224.95" font-size="7.70" fill="#3838dc" text-anchor="end" letter-spacing="-0.15" >0 V</text>
<text x="982.50" y="234.97" font-size="7.70" fill="#3838dc" text-anchor="end" letter-spacing="-0.15" >-7 V</text>
<text x="982.50" y="244.99" font-size="7.70" fill="#3838dc" text-anchor="end" letter-spacing="-0.15" >-14 V</text>
<text x="982.50" y="267.97" font-size="7.70" fill="#e84a4a" text-anchor="end" letter-spacing="-0.15" >28 V</text>
<text x="982.50" y="277.99" font-size="7.70" fill="#e84a4a" text-anchor="end" letter-spacing="-0.15" >21 V</text>
<text x="982.50" y="288.01" font-size="7.70" fill="#e84a4a" text-anchor="end" letter-spacing="-0.15" >14 V</text>
<text x="982.50" y="298.03" font-size="7.70" fill="#e84a4a" text-anchor="end" letter-spacing="-0.15" >7 V</text>
<text x="982.50" y="308.05" font-size="7.70" fill="#e84a4a" text-anchor="end" letter-spacing="-0.15" >0 V</text>
<text x="982.50" y="318.07" font-size="7.70" fill="#e84a4a" text-anchor="end" letter-spacing="-0.15" >-7 V</text>
<text x="982.50" y="328.09" font-size="7.70" fill="#e84a4a" text-anchor="end" letter-spacing="-0.15" >-14 V</text>
<text x="982.50" y="338.11" font-size="7.70" fill="#e84a4a" text-anchor="end" letter-spacing="-0.15" >-21 V</text>
<text x="982.50" y="348.13" font-size="7.70" fill="#e84a4a" text-anchor="end" letter-spacing="-0.15" >-28 V</text>
<text x="982.50" y="367.33" font-size="7.70" fill="#7c58dc" text-anchor="end" letter-spacing="-0.15" >18 V</text>
<text x="982.50" y="377.35" font-size="7.70" fill="#7c58dc" text-anchor="end" letter-spacing="-0.15" >15 V</text>
<text x="982.50" y="387.37" font-size="7.70" fill="#7c58dc" text-anchor="end" letter-spacing="-0.15" >12 V</text>
<text x="982.50" y="397.39" font-size="7.70" fill="#7c58dc" text-anchor="end" letter-spacing="-0.15" >9 V</text>
<text x="982.50" y="407.41" font-size="7.70" fill="#7c58dc" text-anchor="end" letter-spacing="-0.15" >6 V</text>
<text x="982.50" y="417.43" font-size="7.70" fill="#7c58dc" text-anchor="end" letter-spacing="-0.15" >3 V</text>
<text x="982.50" y="427.45" font-size="7.70" fill="#7c58dc" text-anchor="end" letter-spacing="-0.15" >0 V</text>
<text x="982.50" y="437.47" font-size="7.70" fill="#7c58dc" text-anchor="end" letter-spacing="-0.15" >-3 V</text>
<text x="982.50" y="447.49" font-size="7.70" fill="#7c58dc" text-anchor="end" letter-spacing="-0.15" >-6 V</text>
<text x="982.50" y="466.79" font-size="7.70" fill="#f0407c" text-anchor="end" letter-spacing="-0.15" >112 A</text>
<text x="982.50" y="476.81" font-size="7.70" fill="#f0407c" text-anchor="end" letter-spacing="-0.15" >98 A</text>
<text x="982.50" y="486.83" font-size="7.70" fill="#f0407c" text-anchor="end" letter-spacing="-0.15" >84 A</text>
<text x="982.50" y="496.85" font-size="7.70" fill="#f0407c" text-anchor="end" letter-spacing="-0.15" >70 A</text>
<text x="982.50" y="506.87" font-size="7.70" fill="#f0407c" text-anchor="end" letter-spacing="-0.15" >56 A</text>
<text x="982.50" y="516.89" font-size="7.70" fill="#f0407c" text-anchor="end" letter-spacing="-0.15" >42 A</text>
<text x="982.50" y="526.91" font-size="7.70" fill="#f0407c" text-anchor="end" letter-spacing="-0.15" >28 A</text>
<text x="982.50" y="536.93" font-size="7.70" fill="#f0407c" text-anchor="end" letter-spacing="-0.15" >14 A</text>
<text x="982.50" y="546.95" font-size="7.70" fill="#f0407c" text-anchor="end" letter-spacing="-0.15" >0 A</text>
<text x="109.06" y="454.20" font-size="7.40" fill="#5a5a5a" text-anchor="middle" letter-spacing="-0.15" >-100 µs</text>
<text x="207.38" y="454.20" font-size="7.40" fill="#5a5a5a" text-anchor="middle" letter-spacing="-0.15" >-50 µs</text>
<text x="305.90" y="454.20" font-size="7.40" fill="#5a5a5a" text-anchor="middle" letter-spacing="-0.15" >0 s</text>
<text x="404.02" y="454.20" font-size="7.40" fill="#5a5a5a" text-anchor="middle" letter-spacing="-0.15" >50 µs</text>
<text x="502.34" y="454.20" font-size="7.40" fill="#5a5a5a" text-anchor="middle" letter-spacing="-0.15" >100 µs</text>
<text x="600.66" y="454.20" font-size="7.40" fill="#5a5a5a" text-anchor="middle" letter-spacing="-0.15" >150 µs</text>
<text x="698.98" y="454.20" font-size="7.40" fill="#5a5a5a" text-anchor="middle" letter-spacing="-0.15" >200 µs</text>
<text x="797.30" y="454.20" font-size="7.40" fill="#5a5a5a" text-anchor="middle" letter-spacing="-0.15" >250 µs</text>
<text x="895.62" y="454.20" font-size="7.40" fill="#5a5a5a" text-anchor="middle" letter-spacing="-0.15" >300 µs</text>
<path d="M1.6 202.04L4.0 202.20L6.4 202.18L8.8 202.14L11.2 202.09L13.6 202.15L16.0 202.14L18.5 202.31L20.9 202.04L23.3 202.28L25.7 202.31L28.1 202.08L30.5 202.34L32.9 202.27L35.3 202.33L37.7 202.13L40.1 202.16L42.5 202.17L44.9 202.36L47.4 202.23L49.8 202.16L52.2 202.18L54.6 202.13L57.0 202.06L59.4 202.07L61.8 202.31L64.2 202.13L66.6 202.34L69.0 202.12L71.4 202.13L73.8 202.20L76.2 202.10L78.7 202.16L81.1 202.35L83.5 202.32L85.9 202.30L88.3 202.24L90.7 202.33L93.1 202.34L95.5 202.22L97.9 202.27L100.3 202.06L102.7 202.27L105.1 202.18L107.5 202.28L110.0 202.25L112.4 202.13L114.8 202.06L117.2 202.34L119.6 202.08L122.0 202.19L124.4 202.15L126.8 202.14L129.2 202.28L131.6 202.35L134.0 202.12L136.4 202.25L138.9 202.14L141.3 202.22L143.7 202.17L146.1 202.09L148.5 202.09L150.9 202.11L153.3 202.33L155.7 202.20L158.1 202.11L160.5 202.33L162.9 202.36L165.3 202.18L167.7 202.08L170.2 202.10L172.6 202.07L175.0 202.15L177.4 202.07L179.8 202.12L182.2 202.12L184.6 202.22L187.0 202.32L189.4 202.28L191.8 202.17L194.2 202.17L196.6 202.21L199.1 202.16L201.5 202.15L203.9 202.06L206.3 202.13L208.7 202.35L211.1 202.08L213.5 202.20L215.9 202.24L218.3 202.32L220.7 202.11L223.1 202.13L225.5 202.12L227.9 202.17L230.4 202.18L232.8 202.35L235.2 202.31L237.6 202.32L240.0 202.05L242.4 202.05L244.8 202.27L247.2 202.33L249.6 202.19L252.0 202.23L254.4 202.04L256.8 202.17L259.2 202.34L261.7 202.30L264.1 202.31L266.5 202.35L268.9 202.12L271.3 202.07L273.7 202.09L276.1 202.21L278.5 202.26L280.9 202.34L283.3 202.27L285.7 202.25L288.1 202.28L290.6 202.19L293.0 202.22L295.4 202.05L297.8 202.29L300.2 202.11L302.6 202.33L305.0 202.25L308.5 202.49L312.0 202.78L314.4 202.82L316.8 202.95L319.2 202.97L321.6 202.78L324.0 202.77L326.4 202.92L328.9 202.94L331.3 202.88L333.7 202.83L336.1 202.95L338.5 202.77L340.9 202.86L343.3 202.91L345.7 203.08L348.1 202.98L350.5 203.06L352.9 202.93L355.3 202.85L357.8 202.86L360.2 203.09L362.6 203.01L365.0 202.88L367.4 202.79L369.8 202.95L372.2 203.01L374.6 202.93L377.0 202.88L379.4 203.01L381.8 203.10L384.2 202.87L386.7 202.81L389.1 202.91L391.5 202.94L393.9 203.03L396.3 202.87L398.7 203.07L401.1 203.05L403.5 202.98L405.9 202.89L408.3 203.13L410.7 202.92L413.1 203.09L415.6 202.90L418.0 202.90L420.4 203.08L422.8 202.93L425.2 203.14L427.6 203.00L430.0 202.90L432.5 202.81L435.0 202.77L437.5 202.75L440.0 202.74L442.5 202.45L445.0 202.50L447.5 202.41L450.0 202.62L452.5 202.32L455.0 202.26L457.5 202.23L460.0 202.30L462.5 202.43L465.0 202.39L467.5 202.31L470.0 202.36L472.4 202.34L474.8 202.15L477.2 202.10L479.6 202.34L482.0 202.28L484.4 202.05L486.9 202.26L489.3 202.16L491.7 202.16L494.1 202.15L496.5 202.10L498.9 202.05L501.3 202.14L503.7 202.16L506.1 202.35L508.5 202.09L510.9 202.36L513.3 202.11L515.7 202.16L518.1 202.31L520.6 202.31L523.0 202.19L525.4 202.07L527.8 202.20L530.2 202.17L532.6 202.35L535.0 202.11L537.4 202.17L539.8 202.34L542.2 202.06L544.6 202.19L547.0 202.31L549.4 202.30L551.9 202.07L554.3 202.07L556.7 202.08L559.1 202.35L561.5 202.14L563.9 202.30L566.3 202.35L568.7 202.17L571.1 202.15L573.5 202.37L575.9 202.26L578.3 202.14L580.7 202.29L583.2 202.16L585.6 202.15L588.0 202.06L590.4 202.31L592.8 202.36L595.2 202.27L597.6 202.37L600.0 202.07L602.4 202.14L604.8 202.22L607.2 202.37L609.6 202.37L612.0 202.19L614.4 202.15L616.9 202.21L619.3 202.23L621.7 202.37L624.1 202.13L626.5 202.33L628.9 202.31L631.3 202.33L633.7 202.32L636.1 202.27L638.5 202.18L640.9 202.18L643.3 202.19L645.7 202.32L648.2 202.10L650.6 202.14L653.0 202.32L655.4 202.16L657.8 202.10L660.2 202.09L662.6 202.25L665.0 202.18L667.4 202.39L669.8 202.36L672.2 202.40L674.6 202.16L677.0 202.11L679.5 202.11L681.9 202.24L684.3 202.31L686.7 202.23L689.1 202.16L691.5 202.22L693.9 202.28L696.3 202.30L698.7 202.32L701.1 202.36L703.5 202.30L705.9 202.12L708.3 202.36L710.7 202.18L713.2 202.27L715.6 202.21L718.0 202.32L720.4 202.15L722.8 202.17L725.2 202.17L727.6 202.14L730.0 202.37L732.4 202.28L734.8 202.20L737.2 202.22L739.6 202.41L742.0 202.26L744.5 202.17L746.9 202.35L749.3 202.30L751.7 202.41L754.1 202.13L756.5 202.25L758.9 202.36L761.3 202.37L763.7 202.39L766.1 202.11L768.5 202.19L770.9 202.14L773.3 202.16L775.7 202.41L778.2 202.29L780.6 202.40L783.0 202.22L785.4 202.38L787.8 202.25L790.2 202.19L792.6 202.35L795.0 202.41L797.4 202.14L799.8 202.29L802.2 202.30L804.6 202.17L807.0 202.22L809.5 202.15L811.9 202.17L814.3 202.19L816.7 202.30L819.1 202.32L821.5 202.17L823.9 202.11L826.3 202.21L828.7 202.33L831.1 202.17L833.5 202.21L835.9 202.18L838.3 202.37L840.8 202.29L843.2 202.13L845.6 202.15L848.0 202.24L850.4 202.29L852.8 202.32L855.2 202.14L857.6 202.17L860.0 202.34L862.4 202.25L864.8 202.21L867.2 202.22L869.6 202.42L872.0 202.22L874.5 202.30L876.9 202.23L879.3 202.25L881.7 202.40L884.1 202.44L886.5 202.24L888.9 202.18L891.3 202.35L893.7 202.19L896.1 202.12L898.5 202.41L900.9 202.26L903.3 202.39L905.8 202.25L908.2 202.41L910.6 202.27L913.0 202.18L915.4 202.13L917.8 202.30L920.2 202.33L922.6 202.42L925.0 202.16L927.4 202.33L929.8 202.25L932.2 202.29L934.6 202.18L937.1 202.22L939.5 202.30L941.9 202.43L944.3 202.17L946.7 202.29L949.1 202.39L951.5 202.44L953.9 202.20L956.3 202.17L958.7 202.44L961.1 202.45L963.5 202.29L965.9 202.15L968.3 202.43L970.8 202.26L973.2 202.43L975.6 202.34L978.0 202.40L980.4 202.19L982.8 202.39L985.2 202.30" stroke="#3a3ae6" stroke-width="1.00" fill="none" />
<path d="M1.6 285.24L4.6 285.28L7.7 285.37L10.7 285.37L13.7 285.24L16.7 285.24L19.8 285.28L22.8 285.30L25.8 285.28L28.9 285.22L31.9 285.25L34.9 285.34L37.9 285.38L41.0 285.21L44.0 285.31L47.0 285.35L50.1 285.21L53.1 285.37L56.1 285.22L59.1 285.32L62.2 285.31L65.2 285.33L68.2 285.26L71.3 285.28L74.3 285.32L77.3 285.29L80.3 285.33L83.4 285.29L86.4 285.29L89.4 285.20L92.4 285.32L95.5 285.30L98.5 285.25L101.5 285.35L104.6 285.36L107.6 285.29L110.6 285.24L113.6 285.29L116.7 285.22L119.7 285.23L122.7 285.29L125.8 285.22L128.8 285.29L131.8 285.30L134.8 285.21L137.9 285.33L140.9 285.22L143.9 285.35L147.0 285.36L150.0 285.30L153.0 285.21L156.0 285.30L159.1 285.28L162.1 285.39L165.1 285.23L168.2 285.37L171.2 285.40L174.2 285.35L177.2 285.36L180.3 285.24L183.3 285.40L186.3 285.30L189.4 285.39L192.4 285.38L195.4 285.23L198.4 285.36L201.5 285.39L204.5 285.21L207.5 285.27L210.6 285.35L213.6 285.23L216.6 285.38L219.6 285.25L222.7 285.36L225.7 285.23L228.7 285.30L231.7 285.38L234.8 285.24L237.8 285.25L240.8 285.30L243.9 285.26L246.9 285.21L249.9 285.24L252.9 285.23L256.0 285.39L259.0 285.34L262.0 285.38L265.1 285.23L268.1 285.36L271.1 285.22L274.1 285.31L277.2 285.33L280.2 285.27L283.2 285.37L286.3 285.31L289.3 285.32L292.3 285.38L295.3 285.22L298.4 285.40L301.4 285.33L304.0 287.88L307.2 288.04L310.4 288.01L313.6 288.24L316.8 288.24L320.0 288.27L323.3 288.64L326.7 288.86L330.0 289.09L333.3 289.48L336.7 289.63L340.0 290.06L343.3 290.25L346.7 290.63L350.0 291.00L353.3 291.22L356.7 291.53L360.0 291.76L363.3 292.43L366.7 293.17L370.0 293.93L373.3 294.76L376.7 295.45L380.0 296.20L383.3 297.33L386.7 298.23L390.0 299.30L393.3 300.43L396.7 301.35L400.0 302.40L403.0 303.60L406.0 304.67L409.0 305.85L412.0 306.94L415.3 307.88L418.7 308.75L422.0 309.54L426.0 309.92L430.0 310.19L434.0 309.83L438.0 309.69L442.4 308.75L444.2 335.23L447.0 334.52L450.2 333.85L453.5 333.12L456.8 332.33L460.0 331.48L463.9 330.49L467.7 329.47L471.6 328.63L473.7 308.61L478.0 307.57L481.0 307.30L484.0 306.92L487.0 306.69L490.0 306.51L493.0 306.28L496.0 306.28L499.0 305.98L502.0 305.94L505.0 305.78L508.0 305.65L511.0 305.51L514.0 305.56L517.0 305.30L520.0 305.31L523.0 305.39L526.0 305.23L529.0 305.24L532.0 305.32L535.0 305.30L538.0 305.33L541.0 305.36L544.0 305.23L547.0 305.26L550.0 305.26L553.0 305.21L556.0 305.38L559.0 305.36L562.0 305.34L565.0 305.20L568.0 305.37L571.0 305.35L574.0 305.29L577.0 305.35L580.0 305.29L583.0 305.25L586.0 305.22L589.0 305.25L592.0 305.21L595.0 305.27L598.0 305.35L601.0 305.34L604.0 305.37L607.0 305.34L610.0 305.25L613.0 305.31L616.0 305.29L619.0 305.36L622.0 305.30L625.0 305.25L628.0 305.33L631.0 305.39L634.0 305.24L637.1 305.38L640.1 305.20L643.1 305.25L646.1 305.25L649.1 305.35L652.1 305.39L655.1 305.35L658.1 305.27L661.1 305.38L664.1 305.27L667.1 305.25L670.1 305.38L673.1 305.33L676.1 305.34L679.1 305.33L682.1 305.40L685.1 305.29L688.1 305.37L691.1 305.34L694.1 305.37L697.1 305.29L700.1 305.34L703.1 305.31L706.1 305.26L709.1 305.24L712.1 305.32L715.1 305.22L718.1 305.38L721.1 305.23L724.1 305.21L727.1 305.22L730.1 305.39L733.1 305.27L736.1 305.23L739.1 305.21L742.1 305.21L745.1 305.34L748.1 305.33L751.1 305.34L754.1 305.35L757.1 305.21L760.1 305.32L763.1 305.27L766.1 305.36L769.1 305.36L772.1 305.38L775.1 305.21L778.1 305.37L781.1 305.38L784.1 305.39L787.1 305.22L790.1 305.24L793.1 305.22L796.1 305.21L799.1 305.37L802.1 305.36L805.1 305.33L808.1 305.37L811.1 305.33L814.1 305.26L817.1 305.22L820.1 305.22L823.1 305.35L826.1 305.24L829.1 305.26L832.1 305.28L835.1 305.20L838.1 305.25L841.1 305.26L844.1 305.34L847.1 305.27L850.1 305.26L853.1 305.39L856.1 305.30L859.1 305.37L862.1 305.32L865.1 305.21L868.1 305.28L871.2 305.29L874.2 305.35L877.2 305.27L880.2 305.34L883.2 305.31L886.2 305.24L889.2 305.37L892.2 305.22L895.2 305.36L898.2 305.23L901.2 305.20L904.2 305.24L907.2 305.35L910.2 305.40L913.2 305.20L916.2 305.30L919.2 305.30L922.2 305.36L925.2 305.24L928.2 305.30L931.2 305.27L934.2 305.37L937.2 305.25L940.2 305.39L943.2 305.26L946.2 305.24L949.2 305.34L952.2 305.30L955.2 305.22L958.2 305.33L961.2 305.22L964.2 305.36L967.2 305.34L970.2 305.36L973.2 305.33L976.2 305.27L979.2 305.28L982.2 305.28L985.2 305.30" stroke="#ec5454" stroke-width="0.95" fill="none" stroke-linejoin="round"/>
<path d="M24.0 425.34L26.2 425.05L28.4 425.34L30.6 425.03L32.8 425.09L35.0 425.11L37.3 425.34L39.5 425.20L41.7 425.16L43.9 425.34L46.1 425.10L48.3 425.19L50.5 425.21L52.7 425.29L54.9 425.29L57.1 425.25L59.4 425.15L61.6 425.14L63.8 425.08L66.0 425.32L68.2 425.26L70.4 425.29L72.6 425.08L74.8 425.18L77.0 425.30L79.2 425.23L81.5 425.07L83.7 425.19L85.9 425.34L88.1 425.11L90.3 425.09L92.5 425.13L94.7 425.27L96.9 425.32L99.1 425.08L101.3 425.08L103.6 425.11L105.8 425.14L108.0 425.21L110.2 425.08L112.4 425.14L114.6 425.09L116.8 425.37L119.0 425.28L121.2 425.06L123.4 425.37L125.6 425.06L127.9 425.16L130.1 425.37L132.3 425.31L134.5 425.28L136.7 425.18L138.9 425.09L141.1 425.25L143.3 425.06L145.5 425.09L147.7 425.16L150.0 425.03L152.2 425.16L154.4 425.30L156.6 425.27L158.8 425.20L161.0 425.25L163.2 425.19L165.4 425.07L167.6 425.24L169.8 425.17L172.1 425.29L174.3 425.35L176.5 425.17L178.7 425.23L180.9 425.29L183.1 425.17L185.3 425.10L187.5 425.28L189.7 425.34L191.9 425.30L194.2 425.27L196.4 425.33L198.6 425.26L200.8 425.25L203.0 425.18L205.2 425.13L207.4 425.25L209.6 425.06L211.8 425.17L214.0 425.30L216.2 425.28L218.5 425.25L220.7 425.11L222.9 425.17L225.1 425.18L227.3 425.24L229.5 425.17L231.7 425.26L233.9 425.35L236.1 425.09L238.3 425.26L240.6 425.30L242.8 425.16L245.0 425.20L247.2 425.37L249.4 425.03L251.6 425.22L253.8 425.08L256.0 425.30L258.2 425.36L260.4 425.21L262.7 425.06L264.9 425.23L267.1 425.21L269.3 425.28L271.5 425.20L273.7 425.25L275.9 425.32L278.1 425.21L280.3 425.17L282.5 425.36L284.8 425.10L287.0 425.27L289.2 425.16L291.4 425.29L293.6 425.06L295.8 425.37L298.0 425.15L300.2 425.04L302.4 425.12L304.6 425.16L306.8 425.02L309.1 425.17L311.3 425.17L313.5 425.27L315.7 425.15L317.9 425.12L320.1 425.10L322.3 425.29L324.5 425.36L326.7 425.21L328.9 425.10L331.2 425.31L333.4 425.16L335.6 425.10L337.8 425.07L340.0 425.30L342.2 425.31L344.4 425.25L346.6 425.19L348.8 425.22L351.0 425.10L353.3 425.37L355.5 425.15L357.7 425.25L359.9 425.31L362.1 425.31L364.3 425.19L366.5 425.13L368.7 425.22L370.9 425.07L373.1 425.32L375.4 425.15L377.6 425.33L379.8 425.12L382.0 425.16L384.2 425.11L386.4 425.17L389.8 398.49L390.8 402.12L395.0 402.88L397.3 402.65L399.5 402.56L401.8 402.51L404.1 402.50L406.3 402.41L408.6 402.41L410.8 402.34L413.1 402.16L415.4 402.29L417.6 402.19L419.9 401.83L422.2 402.03L424.4 401.99L426.7 401.87L428.9 401.57L431.2 401.74L433.5 401.60L435.7 401.30L438.0 401.22L441.0 401.81L444.0 401.96L446.2 401.41L448.4 400.96L450.6 400.57L452.8 400.20L455.0 400.00L457.2 399.72L459.4 399.53L461.6 399.69L463.8 399.53L466.0 399.18L468.5 399.57L471.0 399.59L473.5 399.78L476.0 399.86L478.5 400.34L481.0 400.70L483.5 401.12L486.0 401.29L488.3 401.57L490.7 401.61L493.0 401.79L495.3 401.78L497.7 402.04L500.0 402.02L502.2 401.93L504.4 401.93L506.7 401.90L508.9 402.04L511.1 401.90L513.3 402.05L515.6 401.95L517.8 402.09L520.0 402.10L522.2 402.13L524.4 402.25L526.7 401.96L528.9 402.27L531.1 402.14L533.3 402.19L535.6 402.24L537.8 402.31L540.0 402.15L542.2 402.18L544.4 402.39L546.7 402.08L548.9 402.29L551.1 402.30L553.3 402.10L555.6 402.32L557.8 402.35L560.0 402.46L562.2 402.24L564.4 402.47L566.6 402.30L568.8 402.29L571.0 402.44L573.2 402.13L575.4 402.38L577.6 402.35L579.8 402.24L582.0 402.43L584.2 402.25L586.4 402.29L588.6 402.31L590.8 402.40L593.0 402.20L595.2 402.28L597.5 402.27L599.7 402.32L601.9 402.42L604.1 402.23L606.3 402.42L608.5 402.27L610.7 402.30L612.9 402.22L615.1 402.30L617.3 402.47L619.5 402.36L621.7 402.41L623.9 402.24L626.1 402.23L628.3 402.23L630.5 402.33L632.7 402.35L634.9 402.40L637.1 402.13L639.3 402.38L641.5 402.44L643.7 402.32L645.9 402.14L648.1 402.23L650.3 402.12L652.5 402.19L654.7 402.45L656.9 402.34L659.1 402.36L661.3 402.40L663.5 402.45L665.7 402.34L668.0 402.34L670.2 402.35L672.4 402.37L674.6 402.33L676.8 402.37L679.0 402.20L681.2 402.36L683.4 402.28L685.6 402.39L687.8 402.16L690.0 402.19L692.2 402.13L694.4 402.40L696.6 402.45L698.8 402.36L701.0 402.25L703.2 402.42L705.4 402.40L707.6 402.32L709.8 402.21L712.0 402.23L714.2 402.27L716.4 402.23L718.6 402.28L720.8 402.35L723.0 402.46L725.2 402.14L727.4 402.32L729.6 402.13L731.8 402.16L734.0 402.41L736.2 402.33L738.5 402.45L740.7 402.28L742.9 402.13L745.1 402.26L747.3 402.33L749.5 402.46L751.7 402.47L753.9 402.29L756.1 402.27L758.3 402.16L760.5 402.35L762.7 402.20L764.9 402.17L767.1 402.13L769.3 402.12L771.5 402.37L773.7 402.16L775.9 402.47L778.1 402.15L780.3 402.43L782.5 402.17L784.7 402.13L786.9 402.38L789.1 402.21L791.3 402.38L793.5 402.19L795.7 402.14L797.9 402.40L800.1 402.38L802.3 402.43L804.5 402.38L806.7 402.15L809.0 402.35L811.2 402.38L813.4 402.29L815.6 402.46L817.8 402.21L820.0 402.47L822.2 402.38L824.4 402.12L826.6 402.13L828.8 402.35L831.0 402.41L833.2 402.15L835.4 402.23L837.6 402.38L839.8 402.18L842.0 402.43L844.2 402.30L846.4 402.14L848.6 402.25L850.8 402.33L853.0 402.28L855.2 402.36L857.4 402.17L859.6 402.41L861.8 402.25L864.0 402.35L866.2 402.35L868.4 402.27L870.6 402.26L872.8 402.40L875.0 402.46L877.2 402.40L879.5 402.32L881.7 402.23L883.9 402.14L886.1 402.47L888.3 402.37L890.5 402.42L892.7 402.24L894.9 402.34L897.1 402.47L899.3 402.42L901.5 402.34L903.7 402.23L905.9 402.27L908.1 402.44L910.3 402.26L912.5 402.37L914.7 402.34L916.9 402.44L919.1 402.41L921.3 402.22L923.5 402.12L925.7 402.21L927.9 402.27L930.1 402.33L932.3 402.41L934.5 402.44L936.7 402.14L938.9 402.42L941.1 402.41L943.3 402.43L945.5 402.33L947.7 402.22L950.0 402.43L952.2 402.41L954.4 402.37L956.6 402.45L958.8 402.24L961.0 402.15L963.2 402.32L965.4 402.41L967.6 402.19L969.8 402.39L972.0 402.46L974.2 402.20L976.4 402.34L978.6 402.36L980.8 402.29L983.0 402.19L985.2 402.30" stroke="#8e6ce2" stroke-width="0.95" fill="none" stroke-linejoin="round"/>
<path d="M24.0 543.70L302.6 543.70L305.0 541.64L307.5 539.59L309.9 537.54L312.4 535.50L314.8 533.48L317.3 531.47L319.7 529.48L322.2 527.51L324.6 525.56L327.1 523.65L329.5 521.76L332.0 519.91L334.4 518.10L336.9 516.32L339.3 514.59L341.8 512.90L344.2 511.26L346.7 509.67L349.1 508.13L351.6 506.65L354.0 505.22L356.4 503.85L358.9 502.55L361.3 501.31L363.8 500.13L366.2 499.02L368.7 497.98L371.1 497.01L373.6 496.11L376.0 495.29L378.5 494.54L380.9 493.86L383.4 493.27L385.8 492.75L388.3 492.31L390.7 491.95L393.2 491.66L395.6 491.46L398.1 491.34L400.5 491.30L402.6 491.34L404.8 491.45L406.9 491.64L409.1 491.90L411.2 492.24L413.4 492.64L415.6 493.11L417.7 493.65L419.9 494.25L422.0 494.90L424.1 495.61L426.3 496.37L428.4 497.17L430.6 498.02L432.8 498.89L434.9 499.80L437.1 500.73L439.2 501.68L441.4 502.63L443.5 503.60L445.2 506.00L473.6 543.20L476.0 543.60" stroke="#f4487e" stroke-width="1.10" fill="none" stroke-linejoin="round"/>
<path d="M476.0 543.43L478.2 543.78L480.4 543.80L482.6 543.57L484.8 543.31L487.0 543.81L489.2 543.79L491.4 543.41L493.6 543.66L495.8 543.88L498.0 543.87L500.2 543.62L502.5 543.58L504.7 543.66L506.9 543.38L509.1 543.38L511.3 543.38L513.5 543.74L515.7 543.50L517.9 543.65L520.1 543.53L522.3 543.61L524.5 543.35L526.7 543.28L528.9 543.95L531.1 543.51L533.3 543.32L535.5 543.69L537.7 543.80L539.9 543.36L542.1 543.67L544.3 543.49L546.5 543.61L548.7 543.26L550.9 543.27L553.2 543.94L555.4 543.86L557.6 543.59L559.8 543.65L562.0 543.43L564.2 543.80L566.4 543.55L568.6 543.91L570.8 543.79L573.0 543.82L575.2 543.92L577.4 543.43L579.6 543.28L581.8 543.39L584.0 543.38L586.2 543.31L588.4 543.29L590.6 543.64L592.8 543.86L595.0 543.57L597.2 543.91L599.4 543.89L601.6 543.29L603.9 543.67L606.1 543.53L608.3 543.33L610.5 543.92L612.7 543.43L614.9 543.65L617.1 543.70L619.3 543.92L621.5 543.72L623.7 543.53L625.9 543.56L628.1 543.36L630.3 543.93L632.5 543.94L634.7 543.41L636.9 543.28L639.1 543.43L641.3 543.50L643.5 543.88L645.7 543.88L647.9 543.84L650.1 543.28L652.3 543.80L654.6 543.75L656.8 543.70L659.0 543.94L661.2 543.29L663.4 543.35L665.6 543.78L667.8 543.91L670.0 543.72L672.2 543.46L674.4 543.66L676.6 543.78L678.8 543.32L681.0 543.48L683.2 543.43L685.4 543.34L687.6 543.59L689.8 543.37L692.0 543.42L694.2 543.35L696.4 543.72L698.6 543.26L700.8 543.75L703.0 543.39L705.3 543.28L707.5 543.90L709.7 543.40L711.9 543.90L714.1 543.86L716.3 543.87L718.5 543.35L720.7 543.56L722.9 543.32L725.1 543.90L727.3 543.84L729.5 543.69L731.7 543.57L733.9 543.49L736.1 543.83L738.3 543.58L740.5 543.69L742.7 543.35L744.9 543.41L747.1 543.29L749.3 543.75L751.5 543.64L753.7 543.35L755.9 543.86L758.2 543.44L760.4 543.54L762.6 543.36L764.8 543.44L767.0 543.84L769.2 543.48L771.4 543.37L773.6 543.59L775.8 543.47L778.0 543.88L780.2 543.33L782.4 543.94L784.6 543.29L786.8 543.88L789.0 543.72L791.2 543.40L793.4 543.58L795.6 543.45L797.8 543.43L800.0 543.39L802.2 543.50L804.4 543.94L806.6 543.95L808.9 543.90L811.1 543.32L813.3 543.45L815.5 543.88L817.7 543.29L819.9 543.76L822.1 543.46L824.3 543.94L826.5 543.26L828.7 543.81L830.9 543.49L833.1 543.35L835.3 543.25L837.5 543.83L839.7 543.62L841.9 543.38L844.1 543.55L846.3 543.89L848.5 543.40L850.7 543.65L852.9 543.35L855.1 543.38L857.3 543.79L859.6 543.75L861.8 543.39L864.0 543.31L866.2 543.31L868.4 543.68L870.6 543.60L872.8 543.44L875.0 543.39L877.2 543.68L879.4 543.75L881.6 543.82L883.8 543.66L886.0 543.39L888.2 543.30L890.4 543.76L892.6 543.54L894.8 543.76L897.0 543.29L899.2 543.82L901.4 543.48L903.6 543.84L905.8 543.86L908.0 543.60L910.3 543.26L912.5 543.89L914.7 543.58L916.9 543.86L919.1 543.44L921.3 543.38L923.5 543.83L925.7 543.51L927.9 543.36L930.1 543.51L932.3 543.67L934.5 543.25L936.7 543.61L938.9 543.56L941.1 543.61L943.3 543.33L945.5 543.75L947.7 543.82L949.9 543.86L952.1 543.47L954.3 543.75L956.5 543.52L958.7 543.78L961.0 543.29L963.2 543.86L965.4 543.92L967.6 543.60L969.8 543.61L972.0 543.62L974.2 543.63L976.4 543.26L978.6 543.93L980.8 543.41L983.0 543.38L985.2 543.60" stroke="#f4487e" stroke-width="1.00" fill="none" />
<text x="12.00" y="191.40" font-size="13.00" fill="#2c2ccc" textLength="15.2" lengthAdjust="spacingAndGlyphs">VS</text>
<text x="5.40" y="286.30" font-size="12.80" fill="#e04a4a" textLength="42.2" lengthAdjust="spacingAndGlyphs">VOUT0</text>
<text x="18.10" y="448.90" font-size="12.80" fill="#7a4ed8" textLength="9.6" lengthAdjust="spacingAndGlyphs">IS</text>
<text x="15.00" y="551.60" font-size="12.80" fill="#f03c78" textLength="24.0" lengthAdjust="spacingAndGlyphs">OUT</text>
<polygon points="3.60,214.50 17.84,214.50 23.60,221.70 17.84,228.90 3.60,228.90" fill="#dcdcfa" stroke="#4a4ae0" stroke-width="1.00" stroke-linejoin="round" opacity="1.00"/>
<text x="11.37" y="224.87" font-size="8.80" fill="#3a3ad8" text-anchor="middle" opacity="1.00">C 1</text>
<polygon points="3.60,298.00 17.84,298.00 23.60,305.20 17.84,312.40 3.60,312.40" fill="#fde2e2" stroke="#e85050" stroke-width="1.00" stroke-linejoin="round" opacity="1.00"/>
<text x="11.37" y="308.37" font-size="8.80" fill="#e85050" text-anchor="middle" opacity="1.00">C 2</text>
<polygon points="3.60,418.00 18.24,418.00 23.60,424.70 18.24,431.40 3.60,431.40" fill="#5e2ed0" stroke="#5e2ed0" stroke-width="1.00" stroke-linejoin="round" opacity="1.00"/>
<text x="11.52" y="427.87" font-size="8.80" fill="#ffffff" text-anchor="middle" opacity="1.00">C 4</text>
<polygon points="3.60,537.00 17.84,537.00 23.60,544.20 17.84,551.40 3.60,551.40" fill="#fddce6" stroke="#f04880" stroke-width="1.00" stroke-linejoin="round" opacity="0.92"/>
<text x="11.37" y="547.37" font-size="8.80" fill="#f04880" text-anchor="middle" opacity="0.92">C 8</text>
<line x1="275.60" y1="154.50" x2="275.60" y2="557.70" stroke="#8e8e8e" stroke-width="1.50" />
<line x1="602.60" y1="154.50" x2="602.60" y2="557.70" stroke="#8e8e8e" stroke-width="1.50" />
<line x1="1.60" y1="333.40" x2="985.20" y2="333.40" stroke="#8e8e8e" stroke-width="1.50" />
<line x1="1.60" y1="492.20" x2="985.20" y2="492.20" stroke="#8e8e8e" stroke-width="1.50" />
<line x1="305.40" y1="160.50" x2="305.40" y2="557.70" stroke="#3c3c3c" stroke-width="0.90" stroke-dasharray="4.2 3.0" />
<polygon points="300.30,154.50 310.50,154.50 305.40,160.20" fill="#1f7fe0" />
<line x1="277.00" y1="282.00" x2="398.00" y2="282.00" stroke="#cdcdcd" stroke-width="1.50" stroke-dasharray="6 3.2" />
<line x1="438.90" y1="303.00" x2="438.90" y2="484.40" stroke="#bcbcbc" stroke-width="1.30" stroke-dasharray="7 3" />
<line x1="438.90" y1="484.40" x2="598.00" y2="484.40" stroke="#b8b8b8" stroke-width="1.10" stroke-dasharray="7 3" />
<line x1="39.60" y1="356.00" x2="39.60" y2="492.00" stroke="#58e6ee" stroke-width="1.00" stroke-dasharray="6 4" />
<line x1="400.60" y1="482.30" x2="400.60" y2="500.00" stroke="#8cc0f0" stroke-width="1.20" stroke-dasharray="4 2.4" />
<line x1="392.50" y1="491.40" x2="409.00" y2="491.40" stroke="#2a50a8" stroke-width="1.20" />
<line x1="984.70" y1="458.00" x2="984.70" y2="557.60" stroke="#2a4aa0" stroke-width="1.20" stroke-dasharray="2.2 1.4" />
<path d="M973.8 540.0l6.2 -5.6v3.9h4.8v3.4h-4.8v3.9z" stroke="none" stroke-width="0.00" fill="#f02c7c" />
<path d="M300.8 458.7h9.4a0.7 0.7 0 0 1 0.7 0.7v8.9a0.7 0.7 0 0 1 -0.7 0.7h-2.6l-2.2 3.4l-2.2 -3.4h-2.6a0.7 0.7 0 0 1 -0.7 -0.7v-8.9a0.7 0.7 0 0 1 0.7 -0.7z" stroke="#1f7fe0" stroke-width="1.20" fill="#ffffff" />
<text x="305.50" y="467.20" font-size="8.20" fill="#1f7fe0" text-anchor="middle" font-weight="bold" >T</text>
<rect x="259.30" y="255.40" width="15.90" height="13.60" fill="#e24a4a" rx="2.20" />
<text x="267.25" y="265.54" font-size="9.40" fill="#ffffff" text-anchor="middle" letter-spacing="-0.30" >C2</text>
<rect x="275.40" y="255.40" width="12.90" height="13.60" fill="#bcbcbc" rx="2.00" />
<text x="281.80" y="265.60" font-size="9.20" fill="#333" text-anchor="middle" >A</text>
<rect x="197.20" y="274.50" width="78.00" height="15.00" fill="#bebebe" rx="2.00" />
<text x="199.40" y="285.60" font-size="10.00" fill="#333333" letter-spacing="0.02" >t: -15.221 µs</text>
<rect x="399.90" y="274.10" width="78.30" height="28.50" fill="#bebebe" rx="2.00" />
<text x="402.10" y="285.50" font-size="10.00" fill="#333333" letter-spacing="0.02" >Δt: 166.419 µs</text>
<text x="402.10" y="297.90" font-size="10.00" fill="#333333" letter-spacing="0.02" >1/Δt: 6.01 kHz</text>
<rect x="143.20" y="317.00" width="78.10" height="15.60" fill="#bebebe" rx="2.00" />
<text x="145.40" y="328.40" font-size="10.00" fill="#333333" letter-spacing="0.02" >v: -19.405 V</text>
<rect x="39.60" y="327.00" width="101.00" height="28.20" fill="#bebebe" rx="2.00" />
<text x="41.80" y="338.40" font-size="10.00" fill="#333333" letter-spacing="0.02" >Δv: 93.204 ?</text>
<text x="41.80" y="350.80" font-size="10.00" fill="#333333" letter-spacing="0.02" >Δv/Δt: 560.06 k?/s</text>
<rect x="4.50" y="327.00" width="11.00" height="13.20" fill="#e8912e" rx="3.60" />
<text x="10.00" y="336.80" font-size="9.00" fill="#3a2a10" text-anchor="middle" letter-spacing="-0.30" >A</text>
<rect x="17.60" y="327.00" width="15.90" height="13.20" fill="#e24a4a" rx="2.20" />
<text x="25.55" y="336.94" font-size="9.40" fill="#ffffff" text-anchor="middle" letter-spacing="-0.30" >C2</text>
<rect x="590.70" y="458.30" width="12.00" height="13.50" fill="#bcbcbc" rx="2.00" />
<text x="596.60" y="468.40" font-size="9.20" fill="#333" text-anchor="middle" >B</text>
<rect x="603.20" y="458.30" width="17.00" height="13.50" fill="#f0407c" rx="2.20" />
<text x="611.70" y="468.39" font-size="9.40" fill="#ffffff" text-anchor="middle" letter-spacing="-0.30" >C8</text>
<rect x="603.20" y="477.20" width="78.50" height="15.00" fill="#bebebe" rx="2.00" />
<text x="605.40" y="488.30" font-size="10.00" fill="#333333" letter-spacing="0.02" >t: 151.198 µs</text>
<rect x="39.60" y="492.60" width="78.20" height="15.00" fill="#bebebe" rx="2.00" />
<text x="41.80" y="503.70" font-size="10.00" fill="#333333" letter-spacing="0.02" >a: 73.798 A</text>
<rect x="4.50" y="485.20" width="11.00" height="13.40" fill="#e8912e" rx="3.60" />
<text x="10.00" y="495.09" font-size="9.00" fill="#3a2a10" text-anchor="middle" letter-spacing="-0.30" >B</text>
<rect x="17.60" y="485.20" width="15.90" height="13.40" fill="#f0407c" rx="2.20" />
<text x="25.55" y="495.24" font-size="9.40" fill="#ffffff" text-anchor="middle" letter-spacing="-0.30" >C8</text>
<text x="281.70" y="178.20" font-size="12.50" fill="#222222" textLength="79.8" lengthAdjust="spacingAndGlyphs" stroke="#222" stroke-width="0.38">67H#1,25deg,</text>
<text x="363.00" y="178.20" font-size="12.50" fill="#222222" textLength="47.5" lengthAdjust="spacingAndGlyphs" stroke="#222" stroke-width="0.38">VS=14V,</text>
<text x="414.70" y="178.20" font-size="12.50" fill="#222222" textLength="24.1" lengthAdjust="spacingAndGlyphs" stroke="#222" stroke-width="0.38">hard</text>
<text x="443.00" y="178.20" font-size="12.50" fill="#222222" textLength="32.3" lengthAdjust="spacingAndGlyphs" stroke="#222" stroke-width="0.38">short</text>
<text x="480.00" y="178.20" font-size="12.50" fill="#222222" textLength="54.7" lengthAdjust="spacingAndGlyphs" stroke="#222" stroke-width="0.38">150ms,no</text>
<text x="540.00" y="178.20" font-size="12.50" fill="#222222" textLength="27.0" lengthAdjust="spacingAndGlyphs" stroke="#222" stroke-width="0.38">GND</text>
<text x="571.70" y="178.20" font-size="12.50" fill="#222222" textLength="57.5" lengthAdjust="spacingAndGlyphs" stroke="#222" stroke-width="0.38">net,4.7uH</text>
<rect x="987.20" y="16.50" width="8.20" height="543.00" fill="#d5d5d5" />
<rect x="990.00" y="281.80" width="2.00" height="2.00" fill="#3a3a3a" rx="0.60" />
<rect x="990.00" y="286.90" width="2.00" height="2.00" fill="#3a3a3a" rx="0.60" />
<rect x="990.00" y="292.00" width="2.00" height="2.00" fill="#3a3a3a" rx="0.60" />
<rect x="995.40" y="16.50" width="86.00" height="542.30" fill="#d5d5d5" rx="1.50" stroke="#bcc0c8" stroke-width="1.00" />
<rect x="996.40" y="17.50" width="85.00" height="540.30" fill="none" rx="1.00" stroke="#dfdfdf" stroke-width="1.00" />
<text x="1020.40" y="27.20" font-size="8.60" fill="#222" font-weight="bold">添加新</text>
<text x="1046.60" y="27.00" font-size="8.60" fill="#222" font-weight="bold" letter-spacing="0.30" >...</text>
<rect x="1000.40" y="32.00" width="35.00" height="19.80" fill="#e24e14" rx="3.00" />
<text x="1009.40" y="45.30" font-size="8.60" fill="#fbe9e0">光标</text>
<rect x="1041.00" y="32.20" width="34.80" height="19.40" fill="#dadada" rx="3.20" stroke="#aeb4ba" stroke-width="1.00" />
<rect x="1041.60" y="42.87" width="33.60" height="8.13" fill="url(#btng)" rx="2.60" />
<text x="1058.40" y="45.00" font-size="8.40" fill="#3a3a3a" text-anchor="middle" letter-spacing="-0.10" >Callout</text>
<rect x="1000.60" y="57.40" width="34.80" height="20.20" fill="#dadada" rx="3.20" stroke="#aeb4ba" stroke-width="1.00" />
<rect x="1001.20" y="68.51" width="33.60" height="8.49" fill="url(#btng)" rx="2.60" />
<text x="1009.40" y="70.80" font-size="8.60" fill="#2a2a2a">测量</text>
<rect x="1041.00" y="57.40" width="34.80" height="20.20" fill="#dadada" rx="3.20" stroke="#aeb4ba" stroke-width="1.00" />
<rect x="1041.60" y="68.51" width="33.60" height="8.49" fill="url(#btng)" rx="2.60" />
<text x="1049.80" y="70.80" font-size="8.60" fill="#2a2a2a">搜索</text>
<rect x="1000.60" y="83.20" width="34.80" height="20.20" fill="#dadada" rx="3.20" stroke="#aeb4ba" stroke-width="1.00" />
<rect x="1001.20" y="94.31" width="33.60" height="8.49" fill="url(#btng)" rx="2.60" />
<text x="1005.55" y="96.60" font-size="8.30" fill="#2a2a2a">结果表</text>
<rect x="1041.00" y="83.20" width="34.80" height="20.20" fill="#dadada" rx="3.20" stroke="#aeb4ba" stroke-width="1.00" />
<rect x="1041.60" y="94.31" width="33.60" height="8.49" fill="url(#btng)" rx="2.60" />
<text x="1049.80" y="96.60" font-size="8.60" fill="#2a2a2a">绘图</text>
<line x1="997.50" y1="107.80" x2="1078.00" y2="107.80" stroke="#bcc4cc" stroke-width="1.00" />
<rect x="1000.60" y="111.60" width="34.80" height="20.00" fill="#dadada" rx="3.20" stroke="#aeb4ba" stroke-width="1.00" />
<rect x="1001.20" y="122.60" width="33.60" height="8.40" fill="url(#btng)" rx="2.60" />
<rect x="1011.60" y="115.60" width="11.80" height="10.20" fill="none" stroke="#2a2a2a" stroke-width="1.50" stroke-dasharray="1.5 1.94"/>
<circle cx="1019.0" cy="119.7" r="2.7" fill="#dcdcdc" stroke="#2a2a2a" stroke-width="1.1"/>
<line x1="1017.00" y1="121.80" x2="1013.80" y2="124.20" stroke="#2a2a2a" stroke-width="1.50" />
<path d="M1022.4 124.2l3.6 3.2l-1.6 0.2l0.9 1.6l-0.9 0.4l-0.9 -1.6l-1.1 1z" stroke="#222" stroke-width="0.50" fill="#222" />
<rect x="1041.00" y="111.60" width="34.80" height="20.00" fill="#dadada" rx="3.20" stroke="#aeb4ba" stroke-width="1.00" />
<rect x="1041.60" y="122.60" width="33.60" height="8.40" fill="url(#btng)" rx="2.60" />
<text x="1046.60" y="124.80" font-size="8.60" fill="#2a2a2a">更多</text>
<text x="1063.60" y="124.60" font-size="8.00" fill="#2a2a2a" letter-spacing="-0.10" >...</text>
<line x1="997.50" y1="137.50" x2="1078.00" y2="137.50" stroke="#bcc4cc" stroke-width="1.00" />
<rect x="997.70" y="146.40" width="80.20" height="32.80" fill="#373737" rx="2.40" />
<path d="M997.7 156.80v-8a2.4 2.4 0 0 1 2.4 -2.4h75.4a2.4 2.4 0 0 1 2.4 2.4v8z" stroke="none" stroke-width="0.00" fill="#a9a7a7" />
<text x="1000.30" y="154.70" font-size="8.70" fill="#3c3c3c" letter-spacing="-0.15" >Meas 1</text>
<rect x="1062.90" y="148.70" width="12.20" height="6.00" fill="#1818d8" rx="3.00" />
<text x="1069.00" y="153.70" font-size="5.20" fill="#ffffff" text-anchor="middle" >1</text>
<text x="1000.30" y="165.70" font-size="8.40" fill="#e6e6e6" letter-spacing="-0.25" >Maximum</text>
<text x="1000.30" y="176.00" font-size="8.40" fill="#e6e6e6" letter-spacing="-0.20" >µ': 14.22 V</text>
<rect x="997.70" y="184.12" width="80.20" height="32.80" fill="#373737" rx="2.40" />
<path d="M997.7 194.52v-8a2.4 2.4 0 0 1 2.4 -2.4h75.4a2.4 2.4 0 0 1 2.4 2.4v8z" stroke="none" stroke-width="0.00" fill="#a9a7a7" />
<text x="1000.30" y="192.42" font-size="8.70" fill="#3c3c3c" letter-spacing="-0.15" >Meas 4</text>
<rect x="1062.90" y="186.42" width="12.20" height="6.00" fill="#1818d8" rx="3.00" />
<text x="1069.00" y="191.42" font-size="5.20" fill="#ffffff" text-anchor="middle" >1</text>
<text x="1000.30" y="203.42" font-size="8.40" fill="#e6e6e6" letter-spacing="-0.25" >Minimum</text>
<text x="1000.30" y="213.72" font-size="8.40" fill="#e6e6e6" letter-spacing="-0.20" >µ': 12.66 V</text>
<rect x="997.70" y="221.84" width="80.20" height="32.80" fill="#373737" rx="2.40" />
<path d="M997.7 232.24v-8a2.4 2.4 0 0 1 2.4 -2.4h75.4a2.4 2.4 0 0 1 2.4 2.4v8z" stroke="none" stroke-width="0.00" fill="#a9a7a7" />
<text x="1000.30" y="230.14" font-size="8.70" fill="#3c3c3c" letter-spacing="-0.15" >Meas 2</text>
<rect x="1062.90" y="224.14" width="12.20" height="6.00" fill="#e03232" rx="3.00" />
<text x="1069.00" y="229.14" font-size="5.20" fill="#ffffff" text-anchor="middle" >2</text>
<text x="1000.30" y="241.14" font-size="8.40" fill="#e6e6e6" letter-spacing="-0.25" >Maximum</text>
<text x="1000.30" y="251.44" font-size="8.40" fill="#e6e6e6" letter-spacing="-0.20" >µ': 14.24 V</text>
<rect x="997.70" y="259.56" width="80.20" height="32.80" fill="#373737" rx="2.40" />
<path d="M997.7 269.96v-8a2.4 2.4 0 0 1 2.4 -2.4h75.4a2.4 2.4 0 0 1 2.4 2.4v8z" stroke="none" stroke-width="0.00" fill="#a9a7a7" />
<text x="1000.30" y="267.86" font-size="8.70" fill="#3c3c3c" letter-spacing="-0.15" >Meas 5</text>
<rect x="1062.90" y="261.86" width="12.20" height="6.00" fill="#e03232" rx="3.00" />
<text x="1069.00" y="266.86" font-size="5.20" fill="#ffffff" text-anchor="middle" >2</text>
<text x="1000.30" y="278.86" font-size="8.40" fill="#e6e6e6" letter-spacing="-0.25" >Minimum</text>
<text x="1000.30" y="289.16" font-size="8.40" fill="#e6e6e6" letter-spacing="-0.20" >µ': -21.13 V</text>
<rect x="997.70" y="297.28" width="80.20" height="32.80" fill="#373737" rx="2.40" />
<path d="M997.7 307.68v-8a2.4 2.4 0 0 1 2.4 -2.4h75.4a2.4 2.4 0 0 1 2.4 2.4v8z" stroke="none" stroke-width="0.00" fill="#a9a7a7" />
<text x="1000.30" y="305.58" font-size="8.70" fill="#3c3c3c" letter-spacing="-0.15" >Meas 3</text>
<rect x="1062.90" y="299.58" width="12.20" height="6.00" fill="#1cb8a0" rx="3.00" />
<text x="1069.00" y="304.58" font-size="5.20" fill="#123" text-anchor="middle" >3</text>
<text x="1000.30" y="316.58" font-size="8.40" fill="#e6e6e6" letter-spacing="-0.25" >Maximum</text>
<text x="1000.30" y="326.88" font-size="8.40" fill="#e6e6e6" letter-spacing="-0.20" >µ': 27.19 mV</text>
<rect x="997.70" y="335.00" width="80.20" height="32.80" fill="#373737" rx="2.40" />
<path d="M997.7 345.40v-8a2.4 2.4 0 0 1 2.4 -2.4h75.4a2.4 2.4 0 0 1 2.4 2.4v8z" stroke="none" stroke-width="0.00" fill="#a9a7a7" />
<text x="1000.30" y="343.30" font-size="8.70" fill="#3c3c3c" letter-spacing="-0.15" >Meas 6</text>
<rect x="1062.90" y="337.30" width="12.20" height="6.00" fill="#1cb8a0" rx="3.00" />
<text x="1069.00" y="342.30" font-size="5.20" fill="#123" text-anchor="middle" >3</text>
<text x="1000.30" y="354.30" font-size="8.40" fill="#e6e6e6" letter-spacing="-0.25" >Minimum</text>
<text x="1000.30" y="364.60" font-size="8.40" fill="#e6e6e6" letter-spacing="-0.20" >µ': -45.00 mV</text>
<rect x="997.70" y="372.72" width="80.20" height="32.80" fill="#373737" rx="2.40" />
<path d="M997.7 383.12v-8a2.4 2.4 0 0 1 2.4 -2.4h75.4a2.4 2.4 0 0 1 2.4 2.4v8z" stroke="none" stroke-width="0.00" fill="#a9a7a7" />
<text x="1000.30" y="381.02" font-size="8.70" fill="#3c3c3c" letter-spacing="-0.15" >Meas 7</text>
<rect x="1062.90" y="375.02" width="12.20" height="6.00" fill="#2068e0" rx="3.00" />
<text x="1069.00" y="380.02" font-size="5.20" fill="#ffffff" text-anchor="middle" >5</text>
<text x="1000.30" y="392.02" font-size="8.40" fill="#e6e6e6" letter-spacing="-0.25" >Maximum</text>
<text x="1000.30" y="402.32" font-size="8.40" fill="#e6e6e6" letter-spacing="-0.20" >µ': 233.6 mV</text>
<rect x="997.70" y="410.44" width="80.20" height="32.80" fill="#373737" rx="2.40" />
<path d="M997.7 420.84v-8a2.4 2.4 0 0 1 2.4 -2.4h75.4a2.4 2.4 0 0 1 2.4 2.4v8z" stroke="none" stroke-width="0.00" fill="#a9a7a7" />
<text x="1000.30" y="418.74" font-size="8.70" fill="#3c3c3c" letter-spacing="-0.15" >Meas 8</text>
<rect x="1062.90" y="412.74" width="12.20" height="6.00" fill="#6a34d8" rx="3.00" />
<text x="1069.00" y="417.74" font-size="5.20" fill="#ffffff" text-anchor="middle" >4</text>
<text x="1000.30" y="429.74" font-size="8.40" fill="#e6e6e6" letter-spacing="-0.25" >Maximum</text>
<text x="1000.30" y="440.04" font-size="8.40" fill="#e6e6e6" letter-spacing="-0.20" >µ': 7.818 V</text>
<rect x="997.70" y="448.16" width="80.20" height="32.80" fill="#373737" rx="2.40" />
<path d="M997.7 458.56v-8a2.4 2.4 0 0 1 2.4 -2.4h75.4a2.4 2.4 0 0 1 2.4 2.4v8z" stroke="none" stroke-width="0.00" fill="#ffffff" />
<text x="1000.30" y="456.46" font-size="8.70" fill="#f0306c" letter-spacing="-0.15" >Meas 9</text>
<rect x="1062.90" y="450.46" width="12.20" height="6.00" fill="#f0306c" rx="3.00" />
<text x="1069.00" y="455.46" font-size="5.20" fill="#ffffff" text-anchor="middle" >8</text>
<text x="1000.30" y="467.46" font-size="8.40" fill="#e6e6e6" letter-spacing="-0.25" >Maximum</text>
<text x="1000.30" y="477.76" font-size="8.40" fill="#e6e6e6" letter-spacing="-0.20" >µ': 74.00 A</text>
<rect x="1.90" y="561.30" width="50.30" height="43.60" fill="#363636" rx="2.20" />
<path d="M1.90 572.2v-8.7a2.2 2.2 0 0 1 2.2 -2.2h45.90a2.2 2.2 0 0 1 2.2 2.2v8.7z" stroke="none" stroke-width="0.00" fill="#b4b4de" />
<text x="4.70" y="570.20" font-size="8.50" fill="#2a2ad2" letter-spacing="-0.30" >Ch 1</text>
<text x="4.70" y="580.40" font-size="8.30" fill="#d6d6d6" letter-spacing="-0.30" >7 V/div</text>
<path d="M5.9 589.6v-1.6a3.2 3.2 0 0 1 6.4 0v1.6M4.9 589.6h2M10.7 589.6h2.4v-2" stroke="#d6d6d6" stroke-width="1.00" fill="none" />
<text x="4.70" y="601.60" font-size="8.30" fill="#d6d6d6" letter-spacing="-0.30" >350 MHz</text>
<rect x="55.30" y="561.30" width="50.30" height="43.60" fill="#363636" rx="2.20" />
<path d="M55.30 572.2v-8.7a2.2 2.2 0 0 1 2.2 -2.2h45.90a2.2 2.2 0 0 1 2.2 2.2v8.7z" stroke="none" stroke-width="0.00" fill="#e6bcbc" />
<text x="58.10" y="570.20" font-size="8.50" fill="#e24444" letter-spacing="-0.30" >Ch 2</text>
<text x="58.10" y="580.40" font-size="8.30" fill="#d6d6d6" letter-spacing="-0.30" >7 V/div</text>
<path d="M59.3 589.6v-1.6a3.2 3.2 0 0 1 6.4 0v1.6M58.3 589.6h2M64.1 589.6h2.4v-2" stroke="#d6d6d6" stroke-width="1.00" fill="none" />
<text x="58.10" y="601.60" font-size="8.30" fill="#d6d6d6" letter-spacing="-0.30" >350 MHz</text>
<rect x="108.80" y="561.30" width="50.30" height="43.60" fill="#8a8a8a" rx="2.20" />
<path d="M108.80 572.2v-8.7a2.2 2.2 0 0 1 2.2 -2.2h45.90a2.2 2.2 0 0 1 2.2 2.2v8.7z" stroke="none" stroke-width="0.00" fill="#74c8ba" />
<text x="111.60" y="570.20" font-size="8.50" fill="#4f8f84" letter-spacing="-0.30" >Ch 3</text>
<text x="111.60" y="580.40" font-size="8.30" fill="#c4c4c4" letter-spacing="-0.30" >1 V/div</text>
<path d="M112.8 589.6v-1.6a3.2 3.2 0 0 1 6.4 0v1.6M111.8 589.6h2M117.6 589.6h2.4v-2" stroke="#c4c4c4" stroke-width="1.00" fill="none" />
<text x="111.60" y="601.60" font-size="8.30" fill="#c4c4c4" letter-spacing="-0.30" >350 MHz</text>
<rect x="162.20" y="561.30" width="50.30" height="43.60" fill="#363636" rx="2.20" />
<path d="M162.20 572.2v-8.7a2.2 2.2 0 0 1 2.2 -2.2h45.90a2.2 2.2 0 0 1 2.2 2.2v8.7z" stroke="none" stroke-width="0.00" fill="#6a2ed0" />
<text x="165.00" y="570.20" font-size="8.50" fill="#ffffff" letter-spacing="-0.30" >Ch 4</text>
<text x="165.00" y="580.40" font-size="8.30" fill="#d6d6d6" letter-spacing="-0.30" >3 V/div</text>
<path d="M166.2 589.6v-1.6a3.2 3.2 0 0 1 6.4 0v1.6M165.2 589.6h2M171.0 589.6h2.4v-2" stroke="#d6d6d6" stroke-width="1.00" fill="none" />
<text x="165.00" y="601.60" font-size="8.30" fill="#d6d6d6" letter-spacing="-0.30" >350 MHz</text>
<rect x="215.90" y="561.30" width="50.30" height="43.60" fill="#8a8a8a" rx="2.20" />
<path d="M215.90 572.2v-8.7a2.2 2.2 0 0 1 2.2 -2.2h45.90a2.2 2.2 0 0 1 2.2 2.2v8.7z" stroke="none" stroke-width="0.00" fill="#72a2da" />
<text x="218.70" y="570.20" font-size="8.50" fill="#d4e2f4" letter-spacing="-0.30" >Ch 5</text>
<text x="218.70" y="580.40" font-size="8.30" fill="#c4c4c4" letter-spacing="-0.30" >5 V/div</text>
<path d="M219.9 589.6v-1.6a3.2 3.2 0 0 1 6.4 0v1.6M218.9 589.6h2M224.7 589.6h2.4v-2" stroke="#c4c4c4" stroke-width="1.00" fill="none" />
<text x="218.70" y="601.60" font-size="8.30" fill="#c4c4c4" letter-spacing="-0.30" >350 MHz</text>
<rect x="269.20" y="561.30" width="50.30" height="43.60" fill="#363636" rx="2.20" />
<path d="M269.20 572.2v-8.7a2.2 2.2 0 0 1 2.2 -2.2h45.90a2.2 2.2 0 0 1 2.2 2.2v8.7z" stroke="none" stroke-width="0.00" fill="#e8bac8" />
<text x="272.00" y="570.20" font-size="8.50" fill="#f0407c" letter-spacing="-0.30" >Ch 8</text>
<text x="272.00" y="580.40" font-size="8.30" fill="#d6d6d6" letter-spacing="-0.30" >14 A/div</text>
<text x="272.00" y="591.00" font-size="8.30" fill="#d6d6d6" letter-spacing="-0.30" >1 MΩ</text>
<text x="272.00" y="601.60" font-size="8.30" fill="#d6d6d6" letter-spacing="-0.30" >350 MHz</text>
<rect x="322.60" y="561.30" width="50.30" height="43.60" fill="#848484" rx="2.20" />
<path d="M322.60 572.2v-8.7a2.2 2.2 0 0 1 2.2 -2.2h45.90a2.2 2.2 0 0 1 2.2 2.2v8.7z" stroke="none" stroke-width="0.00" fill="#72a2da" />
<text x="325.40" y="570.20" font-size="8.50" fill="#d4e2f4" letter-spacing="-0.30" >Math 1</text>
<text x="325.40" y="580.40" font-size="8.30" fill="#c8c8c8" letter-spacing="-0.30" >200 mV/div</text>
<text x="325.40" y="591.00" font-size="8.30" fill="#c8c8c8" letter-spacing="-0.30" >Ch1 - Ch2</text>
<rect x="575.30" y="561.60" width="22.20" height="43.20" fill="#d9d9d9" rx="3.00" stroke="#aeb6be" stroke-width="1.00" />
<line x1="577.90" y1="566.60" x2="595.50" y2="566.60" stroke="#e6de3c" stroke-width="1.10" />
<text x="586.40" y="590.30" font-size="11.60" fill="#4e4e4e" text-anchor="middle" >6</text>
<rect x="600.90" y="561.60" width="21.90" height="43.20" fill="#d9d9d9" rx="3.00" stroke="#aeb6be" stroke-width="1.00" />
<line x1="603.50" y1="566.60" x2="620.80" y2="566.60" stroke="#22b466" stroke-width="1.10" />
<text x="611.85" y="590.30" font-size="11.60" fill="#4e4e4e" text-anchor="middle" >7</text>
<line x1="629.00" y1="562.00" x2="629.00" y2="604.50" stroke="#bcbcbc" stroke-width="1.00" />
<rect x="635.30" y="561.60" width="21.80" height="43.20" fill="#d9d9d9" rx="3.00" stroke="#aeb6be" stroke-width="1.00" />
<line x1="637.90" y1="566.60" x2="655.10" y2="566.60" stroke="#92de72" stroke-width="1.10" />
<text x="638.00" y="589.60" font-size="8.20" fill="#333">数学</text>
<rect x="660.60" y="561.60" width="21.90" height="43.20" fill="#d9d9d9" rx="3.00" stroke="#aeb6be" stroke-width="1.00" />
<line x1="663.20" y1="566.60" x2="680.50" y2="566.60" stroke="#5c4c2c" stroke-width="1.10" />
<text x="663.35" y="589.60" font-size="8.20" fill="#333">参考</text>
<rect x="685.70" y="561.60" width="21.90" height="43.20" fill="#d9d9d9" rx="3.00" stroke="#aeb6be" stroke-width="1.00" />
<line x1="688.30" y1="566.60" x2="705.60" y2="566.60" stroke="#44ae1e" stroke-width="1.10" />
<text x="688.45" y="589.60" font-size="8.20" fill="#333">总线</text>
<line x1="714.00" y1="562.00" x2="714.00" y2="604.50" stroke="#bcbcbc" stroke-width="1.00" />
<rect x="720.60" y="562.30" width="111.20" height="42.20" fill="#373737" rx="1.80" />
<path d="M720.60 573.0v-8.9a1.8 1.8 0 0 1 1.8 -1.8h107.60a1.8 1.8 0 0 1 1.8 1.8v8.9z" stroke="none" stroke-width="0.00" fill="#a9a7a5" />
<text x="723.20" y="571.00" font-size="8.40" fill="#2e2e2e">水平</text>
<text x="723.00" y="580.80" font-size="8.30" fill="#e4e4e4" letter-spacing="-0.30" >20 ms/div</text>
<text x="782.80" y="580.80" font-size="8.30" fill="#e4e4e4" letter-spacing="-0.30" >200 ms</text>
<text x="723.00" y="591.35" font-size="8.30" fill="#e4e4e4" letter-spacing="-0.30" >SR: 6.25 MS/s</text>
<text x="782.80" y="591.35" font-size="8.30" fill="#e4e4e4" letter-spacing="-0.30" >160 ns/pt</text>
<text x="723.00" y="601.90" font-size="8.30" fill="#e4e4e4" letter-spacing="-0.30" >RL: 1.25 Mpts</text>
<text x="790.40" y="601.90" font-size="8.30" fill="#e4e4e4" letter-spacing="-0.30" >17%</text>
<path d="M782.6 595.2h5.6v4.4l-2.8 2.6l-2.8 -2.6z" stroke="none" stroke-width="0.00" fill="#2f7de0" />
<rect x="784.20" y="596.40" width="2.40" height="2.60" fill="#e8f0ff" />
<rect x="836.00" y="562.30" width="88.80" height="42.20" fill="#373737" rx="1.80" />
<path d="M836.00 573.0v-8.9a1.8 1.8 0 0 1 1.8 -1.8h85.20a1.8 1.8 0 0 1 1.8 1.8v8.9z" stroke="none" stroke-width="0.00" fill="#a9a7a5" />
<text x="838.60" y="571.00" font-size="8.40" fill="#2e2e2e">触发</text>
<rect x="838.60" y="574.10" width="16.10" height="8.10" fill="#f0286a" rx="2.00" stroke="#f8a0c0" stroke-width="0.80" />
<text x="846.70" y="581.00" font-size="7.40" fill="#ffffff" text-anchor="middle" >8</text>
<path d="M860.8 581.4h2.2l4.2 -6.4h2.4" stroke="#a8a858" stroke-width="1.00" fill="none" />
<text x="875.60" y="580.80" font-size="8.30" fill="#e4e4e4" letter-spacing="-0.30" >5.04 A</text>
<rect x="929.00" y="562.30" width="82.90" height="42.20" fill="#373737" rx="1.80" />
<path d="M929.00 573.0v-8.9a1.8 1.8 0 0 1 1.8 -1.8h79.30a1.8 1.8 0 0 1 1.8 1.8v8.9z" stroke="none" stroke-width="0.00" fill="#a9a7a5" />
<text x="931.60" y="571.00" font-size="8.40" fill="#2e2e2e">采集</text>
<text x="931.40" y="581.20" font-size="8.20" fill="#e4e4e4">自动</text>
<text x="948.00" y="580.60" font-size="8.30" fill="#e4e4e4" >,</text>
<text x="976.60" y="581.20" font-size="8.20" fill="#e4e4e4">分析</text>
<text x="931.40" y="591.80" font-size="8.20" fill="#e4e4e4">取样</text>
<text x="948.20" y="591.40" font-size="8.30" fill="#e4e4e4" letter-spacing="-0.30" >: 12 bits</text>
<text x="931.60" y="601.90" font-size="8.30" fill="#e4e4e4" >1</text>
<text x="938.20" y="602.30" font-size="8.20" fill="#e4e4e4">采集</text>
<line x1="1019.80" y1="562.00" x2="1019.80" y2="604.50" stroke="#b8c0c8" stroke-width="1.00" />
<rect x="1025.00" y="561.90" width="50.30" height="19.40" fill="#02dcd6" rx="3.00" stroke="#7ec8c8" stroke-width="0.80" />
<text x="1037.30" y="574.60" font-size="8.60" fill="#0a0a0a" font-weight="bold">已停止</text>
</svg>
</body></html>
